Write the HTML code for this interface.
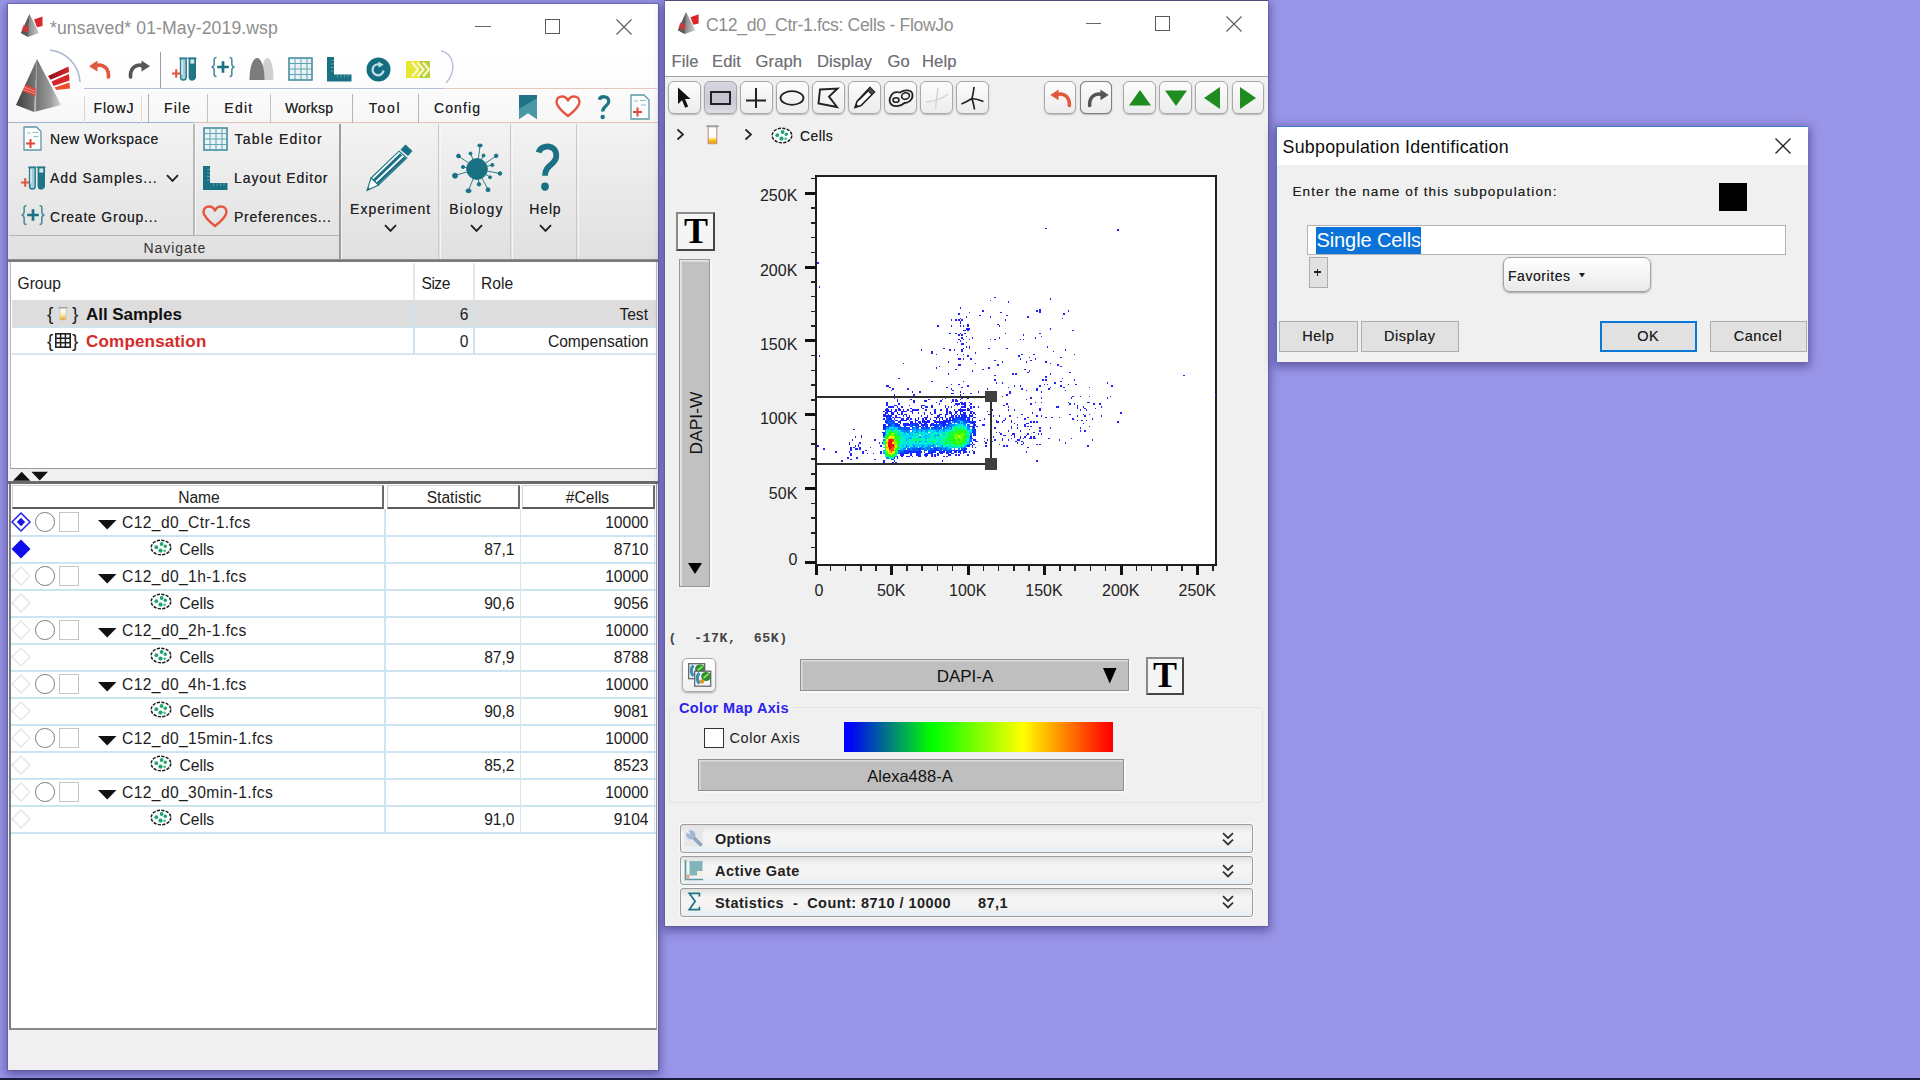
<!DOCTYPE html>
<html>
<head>
<meta charset="utf-8">
<title>FlowJo</title>
<style>
*{box-sizing:border-box;margin:0;padding:0}
html,body{width:1920px;height:1080px;overflow:hidden}
body{background:#9995e8;font-family:"Liberation Sans",sans-serif;position:relative;color:#1a1a1a}
.abs{position:absolute}
.win{position:absolute;background:#f0f0f0}
.t{position:absolute;white-space:nowrap;line-height:1}
svg{position:absolute;overflow:visible}
/* ---------- window 1 ---------- */
#w1{left:8px;top:4px;width:650px;height:1066px;box-shadow:0 0 0 1px rgba(90,85,150,.55),0 3px 9px 2px rgba(50,40,110,.55)}
#w2{left:665px;top:1px;width:603px;height:925px;box-shadow:0 0 0 1px rgba(90,85,150,.5),0 3px 9px 2px rgba(50,40,110,.55)}
#w3{left:1276px;top:126px;width:532px;height:236px;box-shadow:0 3px 9px 2px rgba(50,40,110,.55)}
.tb{font-size:15.6px;color:#1c1c1c}
.mn{font-size:16.6px;color:#727278;letter-spacing:.1px;text-shadow:0 0 .5px rgba(90,90,100,.6)}
.ax{font-size:16px;color:#222}
.dbtn{background:#e1e1e1;border:1.5px solid #adadad}
.dbt{font-size:14.5px;color:#222;text-align:center;letter-spacing:.6px;text-shadow:0 0 .5px rgba(0,0,0,.5)}
.rtxt{font-size:14px;color:#222;letter-spacing:.55px;text-shadow:0 0 .6px rgba(0,0,0,.55)}
</style>
</head>
<body>
<!-- ================= WINDOW 1 : workspace ================= -->
<div id="w1" class="win"></div>
<!-- title bar -->
<div class="abs" style="left:8px;top:4px;width:650px;height:46px;background:#fff"></div>
<svg style="left:20px;top:13px" width="26" height="25" viewBox="0 0 26 25">
  <defs><linearGradient id="pg1" x1="0" x2="1"><stop offset="0" stop-color="#4a4a4a"/><stop offset=".45" stop-color="#8a8a8a"/><stop offset="1" stop-color="#cfcfcf"/></linearGradient></defs>
  <path d="M9.5 1 L1 20 L8 24 L19 20 Z" fill="url(#pg1)"/>
  <path d="M9.5 1 L8 24 L1 20Z" fill="#555" opacity=".75"/>
  <path d="M3.5 12 L8.6 14 L8.2 20 L1.6 17.5Z" fill="#d8343a" opacity=".85"/>
  <path d="M14 6.5 L22.5 3.5 L22.5 13 L17 14.2Z" fill="#d9262c"/>
</svg>
<div class="t" id="t1title" style="left:50px;top:19.7px;font-size:17.6px;color:#8e8e8e;letter-spacing:.12px">*unsaved* 01-May-2019.wsp</div>
<div class="abs" style="left:475px;top:26px;width:16px;height:1px;background:#666"></div>
<div class="abs" style="left:545px;top:19px;width:15px;height:15px;border:1px solid #5a5a5a"></div>
<svg style="left:616px;top:19px" width="16" height="16" viewBox="0 0 16 16"><path d="M.5 .5L15.5 15.5M15.5 .5L.5 15.5" stroke="#5a5a5a" stroke-width="1.1" fill="none"/></svg>

<!-- quick access bar + tab row backgrounds -->
<div class="abs" style="left:8px;top:50px;width:650px;height:73px;background:linear-gradient(#fff 0,#fdfdfd 40%,#f6f6f7 100%)"></div>
<div class="abs" style="left:84px;top:88px;width:360px;height:1.2px;background:#b3bed8"></div>
<div class="abs" style="left:444px;top:88px;width:213px;height:1.2px;background:#e9c7be"></div>
<div class="abs" style="left:8px;top:122px;width:186px;height:1.2px;background:#a3b5d6"></div>
<div class="abs" style="left:194px;top:122px;width:464px;height:1.2px;background:#e6c2b9"></div>
<!-- big logo -->
<svg style="left:10px;top:46px" width="80" height="74" viewBox="0 0 80 74">
  <defs>
   <linearGradient id="pgL" x1="0" x2="1"><stop offset="0" stop-color="#3e3e3e"/><stop offset="1" stop-color="#7a7a7a"/></linearGradient>
   <linearGradient id="pgR" x1="0" x2="1"><stop offset="0" stop-color="#6e6e6e"/><stop offset=".6" stop-color="#9a9a9a"/><stop offset="1" stop-color="#d5d5d5"/></linearGradient>
   <linearGradient id="rd" x1="0" x2="1"><stop offset="0" stop-color="#8c1014"/><stop offset="1" stop-color="#d8242b"/></linearGradient>
  </defs>
  <path d="M40 4 A34 34 0 0 1 70 36" stroke="#a9b7d3" stroke-width="1.6" fill="none"/>
  <path d="M27 13 L6 59 L24 66 Z" fill="url(#pgL)"/>
  <path d="M27 13 L24 66 L51 59 Z" fill="url(#pgR)"/>
  <path d="M27 13 L24 66 L26 66Z" fill="#c9c9c9" opacity=".8"/>
  <path d="M15.5 38.5 L25.8 42.5 L25.2 50 L12.5 45.2Z" fill="#e0443f"/>
  <path d="M14.2 41.2L25.6 45.4M13.3 43.5L25.4 47.8" stroke="#f6a39c" stroke-width=".8"/>
  <path d="M38 30 L58.5 20.5 L59 26 L40.5 33.8Z" fill="url(#rd)"/>
  <path d="M41.5 35.5 L59 28 L59.5 34.5 L43.5 40Z" fill="#d7252c"/>
  <path d="M44.5 41.5 L59.5 36.5 L60 42.5 L46.5 44Z" fill="#e8502e"/>
</svg>
<!-- undo / redo -->
<svg style="left:88px;top:59px" width="26" height="22" viewBox="0 0 26 22"><path d="M7 7 C16 4 21 10 20.5 18" stroke="#e2573d" stroke-width="3.6" fill="none" stroke-linecap="round"/><path d="M1 7.2 L9.5 1.5 L9.5 12.5Z" fill="#e2573d"/></svg>
<svg style="left:125px;top:59px" width="26" height="22" viewBox="0 0 26 22"><path d="M19 7 C10 4 5 10 5.5 18" stroke="#555" stroke-width="3.6" fill="none" stroke-linecap="round"/><path d="M25 7.2 L16.5 1.5 L16.5 12.5Z" fill="#555"/></svg>
<div class="abs" style="left:160px;top:52px;width:1.3px;height:36px;background:#9d9da5"></div>
<!-- QAT icons -->
<svg style="left:171px;top:57px" width="26" height="25" viewBox="0 0 26 25" id="tubesQ">
  <path d="M1 16.5h8.5M5.2 12.2v8.6" stroke="#e2573d" stroke-width="2.1"/>
  <path d="M8.3 1.3h8.2" stroke="#2b7d8f" stroke-width="1.5"/><path d="M9.6 1.5v18.7a2.8 2.8 0 0 0 5.6 0V1.5z" fill="#a9cdd6" stroke="#2b7d8f" stroke-width="1.5"/><path d="M11 3v14.5" stroke="#dff0f3" stroke-width="1.4"/>
  <path d="M17 1.3h8.4" stroke="#1f7485" stroke-width="1.5"/><path d="M18.3 1.5v18.5a3 3 0 0 0 6 0V1.5z" fill="#1f7485" stroke="#1f7485" stroke-width="1.4"/>
  <path d="M19.3 2.4h4v4.2h-4z" fill="#cfe8ee"/>
</svg>
<svg style="left:210px;top:56px" width="26" height="23" viewBox="0 0 26 23"><path d="M6.5 1.5C3.5 1.5 4.2 4 4.2 7C4.2 9.5 3.5 10.8 1.5 11C3.5 11.2 4.2 12.5 4.2 15C4.2 18 3.5 20.5 6.5 20.5M19.5 1.5C22.5 1.5 21.8 4 21.8 7C21.8 9.5 22.5 10.8 24.5 11C22.5 11.2 21.8 12.5 21.8 15C21.8 18 22.5 20.5 19.5 20.5" fill="none" stroke="#4a8d9b" stroke-width="1.6"/><path d="M7.2 11h11.6M13 5.2v11.6" stroke="#1a7183" stroke-width="2.7"/></svg>
<svg style="left:249px;top:57px" width="25" height="23" viewBox="0 0 25 23">
  <path d="M12 23 C12 8 15.5 1 18.5 1 C21.5 1 24.5 8 24.5 23Z" fill="#cfcfcf"/>
  <path d="M.5 23 C.5 8 4.5 1 8 1 C11.5 1 15.5 8 15.5 23Z" fill="#7c7c7c"/>
</svg>
<svg style="left:288px;top:57px" width="25" height="24" viewBox="0 0 25 24"><rect x="1" y="1" width="23" height="22" fill="#e9f3f5" stroke="#3a8797" stroke-width="1.5"/><path d="M1 6.5h23M1 12h23M1 17.5h23M7 1v22M13 1v22M19 1v22" stroke="#5d9fad" stroke-width=".95"/></svg>
<svg style="left:327px;top:57px" width="25" height="25" viewBox="0 0 25 25"><path d="M0 0h7v17.5h17.5v7H0z" fill="#1a7183"/><path d="M4 3.5h3M4 7h3M4 10.500h3M4 14h3M10.500 17.5v3M14 17.5v3M17.5 17.5v3M21 17.5v3" stroke="#5fa0ae" stroke-width=".9"/></svg>
<svg style="left:366px;top:57px" width="25" height="25" viewBox="0 0 25 25"><circle cx="12.5" cy="12.5" r="12" fill="#176d80"/><path d="M17.5 13.5a5.5 5.5 0 1 1-3.6-5.9" stroke="#bfe1e8" stroke-width="2.2" fill="none"/><path d="M12.5 4.5l5 3.2-5 3z" fill="#bfe1e8"/></svg>
<svg style="left:406px;top:61px" width="24" height="17" viewBox="0 0 24 17"><rect width="24" height="17" fill="#e9e632"/><rect x="14" width="10" height="17" fill="#b6cf3a"/><path d="M6 1.5l6 7-6 7M11.5 1.5l6 7-6 7M17 1.5l6 7-6 7" stroke="#f7f7c8" stroke-width="2.4" fill="none"/></svg>
<svg style="left:436px;top:50px" width="22" height="36" viewBox="0 0 22 36"><path d="M5 1 C17 3 22 20 10 33" stroke="#b4bfd9" stroke-width="1.4" fill="none"/></svg>
<!-- tabs -->
<div class="abs" style="left:84px;top:96px;width:1.2px;height:27px;background:#e2d3cc"></div>
<div class="abs" style="left:141px;top:96px;width:1.2px;height:27px;background:#efd6c2"></div>
<div class="abs" style="left:148px;top:94px;width:1.3px;height:29px;background:#b0b0b4"></div>
<div class="abs" style="left:207px;top:94px;width:1.3px;height:29px;background:#c2c2c5"></div>
<div class="abs" style="left:269.5px;top:94px;width:1.3px;height:29px;background:#c2c2c5"></div>
<div class="abs" style="left:352px;top:94px;width:1.3px;height:29px;background:#b4b4b8"></div>
<div class="abs" style="left:418px;top:94px;width:1.3px;height:29px;background:#b4b4b8"></div>
<div class="t rtxt" style="left:93.5px;top:100.5px;letter-spacing:.85px">FlowJ</div>
<div class="t rtxt" style="left:164px;top:100.5px;letter-spacing:1.2px">File</div>
<div class="t rtxt" style="left:224.3px;top:100.5px;letter-spacing:1.25px">Edit</div>
<div class="t rtxt" style="left:285px;top:100.5px;letter-spacing:.15px">Worksp</div>
<div class="t rtxt" style="left:368.7px;top:100.5px;letter-spacing:1.75px">Tool</div>
<div class="t rtxt" style="left:434px;top:100.5px;letter-spacing:1.1px">Config</div>
<svg style="left:519px;top:95px" width="18" height="24" viewBox="0 0 18 24"><path d="M0 0h18v24l-9-6-9 6z" fill="#1f7485"/><path d="M0 14L18 3v21l-9-6-9 6z" fill="#4a97a6"/></svg>
<svg style="left:555px;top:95px" width="26" height="23" viewBox="0 0 26 23"><path d="M13 21 C4 14 1.5 10.5 1.5 7 C1.5 3.5 4 1.5 7 1.5 C9.8 1.5 12 3.2 13 5.6 C14 3.2 16.2 1.5 19 1.5 C22 1.5 24.5 3.5 24.5 7 C24.5 10.5 22 14 13 21Z" fill="#fff" stroke="#e3573f" stroke-width="2.4" stroke-linejoin="round"/></svg>
<svg style="left:597px;top:95px" width="14" height="25" viewBox="0 0 27 50"><path d="M4 9.5 C6 1.5 23 0.5 23 13 C23 22.5 10.8 21.5 10.8 33" stroke="#1f7485" stroke-width="6.6" fill="none"/><circle cx="10.8" cy="44" r="4.4" fill="#1f7485"/></svg>
<svg style="left:630px;top:94px" width="20" height="26" viewBox="0 0 20 26"><path d="M1 1h13l5 5v19H1z" fill="#fbfdfd" stroke="#5b98a5" stroke-width="1.3"/><path d="M4 7h4M10 6.5h6M11 11h5" stroke="#8fbcc6" stroke-width="1.2"/><path d="M3 18h9M7.5 13.5v9" stroke="#e2453a" stroke-width="2"/></svg>

<!-- ribbon -->
<div class="abs" style="left:8px;top:123.5px;width:650px;height:136px;background:linear-gradient(#f3f3f3 0,#ececec 35%,#e0e0e0 100%)"></div>
<div class="abs" style="left:8px;top:258.5px;width:650px;height:3.5px;background:linear-gradient(#9a9a9a,#6e6e6e 60%,#8a8a8a)"></div>
<div class="abs" style="left:193px;top:124px;width:1.5px;height:111px;background:#b9b9b9"></div>
<div class="abs" style="left:194.5px;top:124px;width:1px;height:111px;background:#f8f8f8"></div>
<div class="abs" style="left:9px;top:234.5px;width:330px;height:1.5px;background:#b4b4b4"></div>
<div class="abs" style="left:339px;top:124px;width:1.5px;height:135px;background:#9c9c9c"></div>
<div class="abs" style="left:340.5px;top:124px;width:1px;height:135px;background:#f6f6f6"></div>
<div class="abs" style="left:438px;top:124px;width:1.2px;height:135px;background:#c9c9c9"></div>
<div class="abs" style="left:439.5px;top:124px;width:1px;height:135px;background:#f6f6f6"></div>
<div class="abs" style="left:510px;top:124px;width:1.2px;height:135px;background:#c9c9c9"></div>
<div class="abs" style="left:511.5px;top:124px;width:1px;height:135px;background:#f6f6f6"></div>
<div class="abs" style="left:576px;top:124px;width:1.2px;height:135px;background:#c9c9c9"></div>
<div class="abs" style="left:577.5px;top:124px;width:1px;height:135px;background:#f6f6f6"></div>
<!-- ribbon col 1 -->
<svg style="left:22.5px;top:126px" width="19" height="25" viewBox="0 0 19 25"><path d="M1 1h12.5l4.5 4.5V24H1z" fill="#fbfdfd" stroke="#5b98a5" stroke-width="1.3"/><path d="M4 7h3.5M9.5 6.5h6M10.5 10.5h5" stroke="#8fbcc6" stroke-width="1.2"/><path d="M3 17.5h9M7.5 13v9" stroke="#e2453a" stroke-width="2"/></svg>
<div class="t rtxt" style="left:50px;top:131.5px">New Workspace</div>
<svg style="left:19.5px;top:165.5px" width="26" height="25" viewBox="0 0 26 25">
  <path d="M1 16.5h8.5M5.2 12.2v8.6" stroke="#e2573d" stroke-width="2.1"/>
  <path d="M8.3 1.3h8.2" stroke="#2b7d8f" stroke-width="1.5"/><path d="M9.6 1.5v18.7a2.8 2.8 0 0 0 5.6 0V1.5z" fill="#a9cdd6" stroke="#2b7d8f" stroke-width="1.5"/><path d="M11 3v14.5" stroke="#dff0f3" stroke-width="1.4"/>
  <path d="M17 1.3h8.4" stroke="#1f7485" stroke-width="1.5"/><path d="M18.3 1.5v18.5a3 3 0 0 0 6 0V1.5z" fill="#1f7485" stroke="#1f7485" stroke-width="1.4"/>
  <path d="M19.3 2.4h4v4.2h-4z" fill="#cfe8ee"/>
</svg>
<div class="t rtxt" style="left:50px;top:171px;letter-spacing:.9px">Add Samples...</div>
<svg style="left:166px;top:173.5px" width="13" height="9" viewBox="0 0 13 9"><path d="M1 1.2l5.5 5.6L12 1.2" stroke="#222" stroke-width="1.9" fill="none"/></svg>
<svg style="left:19.5px;top:203.5px" width="26" height="23" viewBox="0 0 26 23"><path d="M6.5 1.5C3.5 1.5 4.2 4 4.2 7C4.2 9.5 3.5 10.8 1.5 11C3.5 11.2 4.2 12.5 4.2 15C4.2 18 3.5 20.5 6.5 20.5M19.5 1.5C22.5 1.5 21.8 4 21.8 7C21.8 9.5 22.5 10.8 24.5 11C22.5 11.2 21.8 12.5 21.8 15C21.8 18 22.5 20.5 19.5 20.5" fill="none" stroke="#4a8d9b" stroke-width="1.6"/><path d="M7.2 11h11.6M13 5.2v11.6" stroke="#1a7183" stroke-width="2.7"/></svg>
<div class="t rtxt" style="left:50px;top:210px;letter-spacing:.77px">Create Group...</div>
<!-- ribbon col 2 -->
<svg style="left:202.5px;top:126.5px" width="25" height="24" viewBox="0 0 25 24"><rect x="1" y="1" width="23" height="22" fill="#e9f3f5" stroke="#3a8797" stroke-width="1.5"/><path d="M1 6.5h23M1 12h23M1 17.5h23M7 1v22M13 1v22M19 1v22" stroke="#5d9fad" stroke-width=".95"/></svg>
<div class="t rtxt" style="left:234.5px;top:131.5px;letter-spacing:1.2px">Table Editor</div>
<svg style="left:202.5px;top:165.5px" width="25" height="24" viewBox="0 0 25 24"><path d="M0 0h7v17h17.5v7H0z" fill="#1a7183"/><path d="M4 3.5h3M4 7h3M4 10.500h3M4 14h3M10.500 17v3M14 17v3M17.5 17v3M21 17v3" stroke="#5fa0ae" stroke-width=".9"/></svg>
<div class="t rtxt" style="left:234px;top:171px;letter-spacing:.92px">Layout Editor</div>
<svg style="left:202px;top:204.5px" width="26" height="23" viewBox="0 0 26 23"><path d="M13 21 C4 14 1.5 10.5 1.5 7 C1.5 3.5 4 1.5 7 1.5 C9.8 1.5 12 3.2 13 5.6 C14 3.2 16.2 1.5 19 1.5 C22 1.5 24.5 3.5 24.5 7 C24.5 10.5 22 14 13 21Z" fill="none" stroke="#e3573f" stroke-width="2.4" stroke-linejoin="round"/></svg>
<div class="t rtxt" style="left:234px;top:210px;letter-spacing:.75px">Preferences...</div>
<div class="t" style="left:143.5px;top:240.5px;font-size:14px;color:#333;letter-spacing:.95px">Navigate</div>
<!-- ribbon big buttons -->
<svg style="left:366.300px;top:142px" width="49" height="50" viewBox="0 0 49 50" id="pencil">
  <path d="M39.5 2.5 L46.5 9 L42 14 L34.5 7.800Z" fill="#1a7183"/>
  <path d="M33 9.200 L40.800 16 L12.500 43 L5 36Z" fill="#fff" stroke="#1a7183" stroke-width="1.1"/>
  <path d="M34 11.200 L36.300 13.200 L9 39.500 L7 37.500Z M37.800 14.500 L39.800 16.300 L12.300 42.300 L10.500 40.600Z" fill="#1a7183"/>
  <path d="M5 36 L12.500 43 L1 48.500Z" fill="#fff" stroke="#1a7183" stroke-width="1.1"/>
  <path d="M1 48.500l3.300-1.300-2-2z" fill="#1a7183"/>
</svg>
<div class="t rtxt" style="left:350px;top:201.5px;letter-spacing:1.05px">Experiment</div>
<svg style="left:384px;top:223.5px" width="13" height="9" viewBox="0 0 13 9"><path d="M1 1.2l5.5 5.6L12 1.2" stroke="#222" stroke-width="1.9" fill="none"/></svg>
<svg style="left:451px;top:141.500px" width="52" height="51" viewBox="0 0 52 51" id="virus">
  <g stroke="#1a7183" stroke-width=".9" fill="#1a7183">
   <circle cx="26" cy="27" r="10.400"/>
   <path d="M26 27L29 4M26 27L45 14M26 27L49 31.500M26 27L37 47.500M26 27L17.500 48.500M26 27L4 33.500M26 27L7.500 14M26 27L19.500 11.500M26 27L32.500 13.500M26 27L41 23M26 27L39 35M26 27L28 42M26 27L12 25"/>
   <ellipse cx="29" cy="3.500" rx="2.300" ry="1.500"/><circle cx="45.200" cy="13.800" r="1.800"/><circle cx="49" cy="31.500" r="1.800"/><circle cx="37" cy="47.800" r="2"/><ellipse cx="17.500" cy="48.800" rx="2.600" ry="1.900"/><circle cx="4" cy="33.700" r="2.500"/><circle cx="7.500" cy="14" r="1.900"/><circle cx="19.500" cy="11.500" r="1.500"/><circle cx="32.500" cy="13.500" r="1.500"/><circle cx="41.300" cy="23" r="1.600"/><circle cx="39" cy="35.300" r="1.500"/><circle cx="28" cy="42.300" r="1.800"/><circle cx="12" cy="25" r="1.600"/>
  </g>
</svg>
<div class="t rtxt" style="left:449.3px;top:201.5px;letter-spacing:1.2px">Biology</div>
<svg style="left:469.5px;top:223.5px" width="13" height="9" viewBox="0 0 13 9"><path d="M1 1.2l5.5 5.6L12 1.2" stroke="#222" stroke-width="1.9" fill="none"/></svg>
<svg style="left:535px;top:142.500px" width="25" height="49.500" viewBox="0 0 27 50" preserveAspectRatio="none"><path d="M4 9.5 C6 1.5 23 0.5 23 13 C23 22.5 10.8 21.5 10.8 33" stroke="#1a7183" stroke-width="6.200" fill="none"/><circle cx="10.8" cy="44" r="4.2" fill="#1a7183"/></svg>
<div class="t rtxt" style="left:529.3px;top:201.5px;letter-spacing:.85px">Help</div>
<svg style="left:538.5px;top:223.5px" width="13" height="9" viewBox="0 0 13 9"><path d="M1 1.2l5.5 5.6L12 1.2" stroke="#222" stroke-width="1.9" fill="none"/></svg>
<!-- group panel -->
<div class="abs" style="left:10px;top:262px;width:647px;height:207px;background:#fff;border-left:1.5px solid #b5b5b5;border-right:1.5px solid #c4c4c4;border-bottom:1.5px solid #9a9a9a"></div>
<div class="t tb" style="left:17.5px;top:275.5px">Group</div>
<div class="t tb" style="left:421.5px;top:275.5px;letter-spacing:-.5px">Size</div>
<div class="t tb" style="left:481px;top:275.5px">Role</div>
<div class="abs" style="left:413px;top:263px;width:1.5px;height:37px;background:#e6e6e6"></div>
<div class="abs" style="left:473px;top:263px;width:1.5px;height:37px;background:#e6e6e6"></div>
<div class="abs" style="left:11.5px;top:300px;width:644px;height:27px;background:#dddddd"></div>
<div class="abs" style="left:11.5px;top:326px;width:644px;height:2px;background:#cfe2e9"></div>
<div class="abs" style="left:11.5px;top:353px;width:644px;height:2px;background:#d3e8f0"></div>
<div class="abs" style="left:413px;top:300px;width:1.5px;height:54px;background:#cfe4ee"></div>
<div class="abs" style="left:473px;top:300px;width:1.5px;height:54px;background:#cfe4ee"></div>
<div class="t" style="left:47px;top:304px;font-size:19px;color:#222;letter-spacing:0">{</div>
<div class="t" style="left:72px;top:304px;font-size:19px;color:#222">}</div>
<svg style="left:58px;top:307px" width="10" height="14" viewBox="0 0 10 14"><defs><linearGradient id="tg" x1="0" y1="0" x2="0" y2="1"><stop offset="0" stop-color="#fff"/><stop offset=".5" stop-color="#fff3c0"/><stop offset="1" stop-color="#f0a000"/></linearGradient></defs><path d="M.5 .8h9" stroke="#999" stroke-width="1.4"/><path d="M2 1.5h6v11.5h-6z" fill="url(#tg)" stroke="#c9c9c9" stroke-width=".8"/></svg>
<div class="t" style="left:47px;top:331px;font-size:19px;color:#222">{</div>
<div class="t" style="left:72px;top:331px;font-size:19px;color:#222">}</div>
<svg style="left:55px;top:333px" width="16" height="15" viewBox="0 0 16 15"><rect x=".8" y=".8" width="14.4" height="13.4" fill="#fff" stroke="#222" stroke-width="1.6"/><path d="M.8 5.2h14.4M.8 9.8h14.4M5.6 .8v13.4M10.4 .8v13.4" stroke="#222" stroke-width="1.5"/></svg>
<div class="t" style="left:86px;top:305.5px;font-size:17px;font-weight:700;color:#111;letter-spacing:-.05px">All Samples</div>
<div class="t" style="left:86px;top:332.5px;font-size:17px;font-weight:700;color:#d62a2a;letter-spacing:.2px">Compensation</div>
<div class="t tb" style="right:1451.5px;top:306.5px">6</div>
<div class="t tb" style="right:1451.5px;top:333.5px">0</div>
<div class="t tb" style="right:1272.0px;top:306.5px">Test</div>
<div class="t tb" style="right:1271.5px;top:333.5px">Compensation</div>
<div class="abs" style="left:8px;top:470px;width:650px;height:12px;background:#f0f0f0"></div>
<svg style="left:13px;top:471px" width="36" height="10" viewBox="0 0 36 10"><path d="M0 9.8L8.7 .8L17.4 9.8Z M18.4 .8L35 .8L26.7 9.4Z" fill="#111"/></svg>
<div class="abs" style="left:8px;top:481px;width:650px;height:2.5px;background:#6b6b6b"></div>
<div class="abs" style="left:9px;top:483.5px;width:648px;height:546px;background:#fff;border-left:2px solid #7b7b7b;border-right:1.5px solid #9e9e9e;border-bottom:2px solid #8a8a8a"></div>
<div class="abs" style="left:12.0px;top:485px;width:372.0px;height:23.5px;background:#fff;border:1.5px solid #d0d0d0;border-right:2px solid #6a6a6a;border-bottom:2.5px solid #5a5a5a"></div>
<div class="t tb" style="left:139.0px;top:490px;width:120px;text-align:center">Name</div>
<div class="abs" style="left:386.5px;top:485px;width:133.0px;height:23.5px;background:#fff;border:1.5px solid #d0d0d0;border-right:2px solid #6a6a6a;border-bottom:2.5px solid #5a5a5a"></div>
<div class="t tb" style="left:394.0px;top:490px;width:120px;text-align:center">Statistic</div>
<div class="abs" style="left:521.5px;top:485px;width:133.0px;height:23.5px;background:#fff;border:1.5px solid #d0d0d0;border-right:2px solid #6a6a6a;border-bottom:2.5px solid #5a5a5a"></div>
<div class="t tb" style="left:527.5px;top:490px;width:120px;text-align:center">#Cells</div>
<div class="abs" style="left:11px;top:534.8px;width:644.5px;height:1.8px;background:#cde5f0"></div>
<svg style="left:11px;top:512px" width="20" height="20" viewBox="0 0 20 20"><path d="M10 1L19 10L10 19L1 10Z" fill="#fff" stroke="#2222ee" stroke-width="1.5"/><path d="M10 5.8L14.2 10L10 14.2L5.8 10Z" fill="#1515e6"/></svg>
<div class="abs" style="left:35px;top:512px;width:19.5px;height:19.5px;border:1.5px solid #7d7d7d;border-radius:50%;background:#fff"></div>
<div class="abs" style="left:59px;top:512px;width:19.5px;height:19.5px;border:1.5px solid #c4c4c4;background:#fff"></div>
<svg style="left:98px;top:519.5px" width="19" height="10" viewBox="0 0 19 10"><path d="M0 0H18.5L9.2 9.4Z" fill="#111"/></svg>
<div class="t tb" style="left:122px;top:515.4px;letter-spacing:.4px">C12_d0_Ctr-1.fcs</div>
<div class="t tb" style="right:1271.5px;top:515.4px">10000</div>
<div class="abs" style="left:11px;top:561.8px;width:644.5px;height:1.8px;background:#cde5f0"></div>
<svg style="left:11px;top:539px" width="20" height="20" viewBox="0 0 20 20"><path d="M10 .5L19.5 10L10 19.5L.5 10Z" fill="#0d0dee"/></svg>
<svg style="left:150px;top:539.0px" width="22" height="17" viewBox="0 0 22 17"><g><ellipse cx="11" cy="8.5" rx="9.8" ry="7.3" fill="#fbfffd" stroke="#1d1d1d" stroke-width="1.5" stroke-dasharray="3.2 1.3"/><circle cx="6.3" cy="8.2" r="1.9" fill="#20a36b"/><circle cx="11.6" cy="5" r="1.9" fill="#20a36b"/><circle cx="15.3" cy="7.2" r="1.7" fill="#20a36b"/><circle cx="10.5" cy="11.6" r="2.1" fill="#20a36b"/><circle cx="14.6" cy="11.8" r="1.3" fill="#3fb887"/></g></svg>
<div class="t tb" style="left:179.5px;top:542.4px">Cells</div>
<div class="t tb" style="right:1405.5px;top:542.4px">87,1</div>
<div class="t tb" style="right:1271.5px;top:542.4px">8710</div>
<div class="abs" style="left:11px;top:588.8px;width:644.5px;height:1.8px;background:#cde5f0"></div>
<svg style="left:11px;top:566px" width="20" height="20" viewBox="0 0 20 20"><path d="M10 1L19 10L10 19L1 10Z" fill="#fff" stroke="#e4e4e4" stroke-width="1.3"/></svg>
<div class="abs" style="left:35px;top:566px;width:19.5px;height:19.5px;border:1.5px solid #7d7d7d;border-radius:50%;background:#fff"></div>
<div class="abs" style="left:59px;top:566px;width:19.5px;height:19.5px;border:1.5px solid #c4c4c4;background:#fff"></div>
<svg style="left:98px;top:573.5px" width="19" height="10" viewBox="0 0 19 10"><path d="M0 0H18.5L9.2 9.4Z" fill="#111"/></svg>
<div class="t tb" style="left:122px;top:569.4px;letter-spacing:.4px">C12_d0_1h-1.fcs</div>
<div class="t tb" style="right:1271.5px;top:569.4px">10000</div>
<div class="abs" style="left:11px;top:615.8px;width:644.5px;height:1.8px;background:#cde5f0"></div>
<svg style="left:11px;top:593px" width="20" height="20" viewBox="0 0 20 20"><path d="M10 1L19 10L10 19L1 10Z" fill="#fff" stroke="#e4e4e4" stroke-width="1.3"/></svg>
<svg style="left:150px;top:593.0px" width="22" height="17" viewBox="0 0 22 17"><g><ellipse cx="11" cy="8.5" rx="9.8" ry="7.3" fill="#fbfffd" stroke="#1d1d1d" stroke-width="1.5" stroke-dasharray="3.2 1.3"/><circle cx="6.3" cy="8.2" r="1.9" fill="#20a36b"/><circle cx="11.6" cy="5" r="1.9" fill="#20a36b"/><circle cx="15.3" cy="7.2" r="1.7" fill="#20a36b"/><circle cx="10.5" cy="11.6" r="2.1" fill="#20a36b"/><circle cx="14.6" cy="11.8" r="1.3" fill="#3fb887"/></g></svg>
<div class="t tb" style="left:179.5px;top:596.4px">Cells</div>
<div class="t tb" style="right:1405.5px;top:596.4px">90,6</div>
<div class="t tb" style="right:1271.5px;top:596.4px">9056</div>
<div class="abs" style="left:11px;top:642.8px;width:644.5px;height:1.8px;background:#cde5f0"></div>
<svg style="left:11px;top:620px" width="20" height="20" viewBox="0 0 20 20"><path d="M10 1L19 10L10 19L1 10Z" fill="#fff" stroke="#e4e4e4" stroke-width="1.3"/></svg>
<div class="abs" style="left:35px;top:620px;width:19.5px;height:19.5px;border:1.5px solid #7d7d7d;border-radius:50%;background:#fff"></div>
<div class="abs" style="left:59px;top:620px;width:19.5px;height:19.5px;border:1.5px solid #c4c4c4;background:#fff"></div>
<svg style="left:98px;top:627.5px" width="19" height="10" viewBox="0 0 19 10"><path d="M0 0H18.5L9.2 9.4Z" fill="#111"/></svg>
<div class="t tb" style="left:122px;top:623.4px;letter-spacing:.4px">C12_d0_2h-1.fcs</div>
<div class="t tb" style="right:1271.5px;top:623.4px">10000</div>
<div class="abs" style="left:11px;top:669.8px;width:644.5px;height:1.8px;background:#cde5f0"></div>
<svg style="left:11px;top:647px" width="20" height="20" viewBox="0 0 20 20"><path d="M10 1L19 10L10 19L1 10Z" fill="#fff" stroke="#e4e4e4" stroke-width="1.3"/></svg>
<svg style="left:150px;top:647.0px" width="22" height="17" viewBox="0 0 22 17"><g><ellipse cx="11" cy="8.5" rx="9.8" ry="7.3" fill="#fbfffd" stroke="#1d1d1d" stroke-width="1.5" stroke-dasharray="3.2 1.3"/><circle cx="6.3" cy="8.2" r="1.9" fill="#20a36b"/><circle cx="11.6" cy="5" r="1.9" fill="#20a36b"/><circle cx="15.3" cy="7.2" r="1.7" fill="#20a36b"/><circle cx="10.5" cy="11.6" r="2.1" fill="#20a36b"/><circle cx="14.6" cy="11.8" r="1.3" fill="#3fb887"/></g></svg>
<div class="t tb" style="left:179.5px;top:650.4px">Cells</div>
<div class="t tb" style="right:1405.5px;top:650.4px">87,9</div>
<div class="t tb" style="right:1271.5px;top:650.4px">8788</div>
<div class="abs" style="left:11px;top:696.8px;width:644.5px;height:1.8px;background:#cde5f0"></div>
<svg style="left:11px;top:674px" width="20" height="20" viewBox="0 0 20 20"><path d="M10 1L19 10L10 19L1 10Z" fill="#fff" stroke="#e4e4e4" stroke-width="1.3"/></svg>
<div class="abs" style="left:35px;top:674px;width:19.5px;height:19.5px;border:1.5px solid #7d7d7d;border-radius:50%;background:#fff"></div>
<div class="abs" style="left:59px;top:674px;width:19.5px;height:19.5px;border:1.5px solid #c4c4c4;background:#fff"></div>
<svg style="left:98px;top:681.5px" width="19" height="10" viewBox="0 0 19 10"><path d="M0 0H18.5L9.2 9.4Z" fill="#111"/></svg>
<div class="t tb" style="left:122px;top:677.4px;letter-spacing:.4px">C12_d0_4h-1.fcs</div>
<div class="t tb" style="right:1271.5px;top:677.4px">10000</div>
<div class="abs" style="left:11px;top:723.8px;width:644.5px;height:1.8px;background:#cde5f0"></div>
<svg style="left:11px;top:701px" width="20" height="20" viewBox="0 0 20 20"><path d="M10 1L19 10L10 19L1 10Z" fill="#fff" stroke="#e4e4e4" stroke-width="1.3"/></svg>
<svg style="left:150px;top:701.0px" width="22" height="17" viewBox="0 0 22 17"><g><ellipse cx="11" cy="8.5" rx="9.8" ry="7.3" fill="#fbfffd" stroke="#1d1d1d" stroke-width="1.5" stroke-dasharray="3.2 1.3"/><circle cx="6.3" cy="8.2" r="1.9" fill="#20a36b"/><circle cx="11.6" cy="5" r="1.9" fill="#20a36b"/><circle cx="15.3" cy="7.2" r="1.7" fill="#20a36b"/><circle cx="10.5" cy="11.6" r="2.1" fill="#20a36b"/><circle cx="14.6" cy="11.8" r="1.3" fill="#3fb887"/></g></svg>
<div class="t tb" style="left:179.5px;top:704.4px">Cells</div>
<div class="t tb" style="right:1405.5px;top:704.4px">90,8</div>
<div class="t tb" style="right:1271.5px;top:704.4px">9081</div>
<div class="abs" style="left:11px;top:750.8px;width:644.5px;height:1.8px;background:#cde5f0"></div>
<svg style="left:11px;top:728px" width="20" height="20" viewBox="0 0 20 20"><path d="M10 1L19 10L10 19L1 10Z" fill="#fff" stroke="#e4e4e4" stroke-width="1.3"/></svg>
<div class="abs" style="left:35px;top:728px;width:19.5px;height:19.5px;border:1.5px solid #7d7d7d;border-radius:50%;background:#fff"></div>
<div class="abs" style="left:59px;top:728px;width:19.5px;height:19.5px;border:1.5px solid #c4c4c4;background:#fff"></div>
<svg style="left:98px;top:735.5px" width="19" height="10" viewBox="0 0 19 10"><path d="M0 0H18.5L9.2 9.4Z" fill="#111"/></svg>
<div class="t tb" style="left:122px;top:731.4px;letter-spacing:.4px">C12_d0_15min-1.fcs</div>
<div class="t tb" style="right:1271.5px;top:731.4px">10000</div>
<div class="abs" style="left:11px;top:777.8px;width:644.5px;height:1.8px;background:#cde5f0"></div>
<svg style="left:11px;top:755px" width="20" height="20" viewBox="0 0 20 20"><path d="M10 1L19 10L10 19L1 10Z" fill="#fff" stroke="#e4e4e4" stroke-width="1.3"/></svg>
<svg style="left:150px;top:755.0px" width="22" height="17" viewBox="0 0 22 17"><g><ellipse cx="11" cy="8.5" rx="9.8" ry="7.3" fill="#fbfffd" stroke="#1d1d1d" stroke-width="1.5" stroke-dasharray="3.2 1.3"/><circle cx="6.3" cy="8.2" r="1.9" fill="#20a36b"/><circle cx="11.6" cy="5" r="1.9" fill="#20a36b"/><circle cx="15.3" cy="7.2" r="1.7" fill="#20a36b"/><circle cx="10.5" cy="11.6" r="2.1" fill="#20a36b"/><circle cx="14.6" cy="11.8" r="1.3" fill="#3fb887"/></g></svg>
<div class="t tb" style="left:179.5px;top:758.4px">Cells</div>
<div class="t tb" style="right:1405.5px;top:758.4px">85,2</div>
<div class="t tb" style="right:1271.5px;top:758.4px">8523</div>
<div class="abs" style="left:11px;top:804.8px;width:644.5px;height:1.8px;background:#cde5f0"></div>
<svg style="left:11px;top:782px" width="20" height="20" viewBox="0 0 20 20"><path d="M10 1L19 10L10 19L1 10Z" fill="#fff" stroke="#e4e4e4" stroke-width="1.3"/></svg>
<div class="abs" style="left:35px;top:782px;width:19.5px;height:19.5px;border:1.5px solid #7d7d7d;border-radius:50%;background:#fff"></div>
<div class="abs" style="left:59px;top:782px;width:19.5px;height:19.5px;border:1.5px solid #c4c4c4;background:#fff"></div>
<svg style="left:98px;top:789.5px" width="19" height="10" viewBox="0 0 19 10"><path d="M0 0H18.5L9.2 9.4Z" fill="#111"/></svg>
<div class="t tb" style="left:122px;top:785.4px;letter-spacing:.4px">C12_d0_30min-1.fcs</div>
<div class="t tb" style="right:1271.5px;top:785.4px">10000</div>
<div class="abs" style="left:11px;top:831.8px;width:644.5px;height:1.8px;background:#cde5f0"></div>
<svg style="left:11px;top:809px" width="20" height="20" viewBox="0 0 20 20"><path d="M10 1L19 10L10 19L1 10Z" fill="#fff" stroke="#e4e4e4" stroke-width="1.3"/></svg>
<svg style="left:150px;top:809.0px" width="22" height="17" viewBox="0 0 22 17"><g><ellipse cx="11" cy="8.5" rx="9.8" ry="7.3" fill="#fbfffd" stroke="#1d1d1d" stroke-width="1.5" stroke-dasharray="3.2 1.3"/><circle cx="6.3" cy="8.2" r="1.9" fill="#20a36b"/><circle cx="11.6" cy="5" r="1.9" fill="#20a36b"/><circle cx="15.3" cy="7.2" r="1.7" fill="#20a36b"/><circle cx="10.5" cy="11.6" r="2.1" fill="#20a36b"/><circle cx="14.6" cy="11.8" r="1.3" fill="#3fb887"/></g></svg>
<div class="t tb" style="left:179.5px;top:812.4px">Cells</div>
<div class="t tb" style="right:1405.5px;top:812.4px">91,0</div>
<div class="t tb" style="right:1271.5px;top:812.4px">9104</div>
<div class="abs" style="left:384px;top:509px;width:1.5px;height:324px;background:#cfe6f1"></div>
<div class="abs" style="left:519.5px;top:509px;width:1.5px;height:324px;background:#cfe6f1"></div>
<div class="abs" style="left:653.5px;top:509px;width:1.5px;height:324px;background:#cfe6f1"></div>

<!-- ================= WINDOW 2 : graph ================= -->
<div class="abs" style="left:665px;top:0;width:603px;height:1.5px;background:#4b4a5c"></div>
<div id="w2" class="win"></div>
<div class="abs" style="left:665px;top:1px;width:603px;height:75px;background:#fff"></div>
<svg style="left:677px;top:11px" width="25" height="24" viewBox="0 0 26 25">
  <path d="M9.5 1 L1 20 L8 24 L19 20 Z" fill="url(#pg1)"/>
  <path d="M9.5 1 L8 24 L1 20Z" fill="#555" opacity=".75"/>
  <path d="M3.5 12 L8.6 14 L8.2 20 L1.6 17.5Z" fill="#d8343a" opacity=".85"/>
  <path d="M14 6.5 L22.5 3.5 L22.5 13 L17 14.2Z" fill="#d9262c"/>
</svg>
<div class="t" id="t2title" style="left:706px;top:17px;font-size:17.6px;color:#8e8e8e;letter-spacing:-.34px">C12_d0_Ctr-1.fcs: Cells - FlowJo</div>
<div class="abs" style="left:1086px;top:23px;width:15px;height:1px;background:#666"></div>
<div class="abs" style="left:1155px;top:16px;width:15px;height:15px;border:1px solid #5a5a5a"></div>
<svg style="left:1226px;top:16px" width="16" height="16" viewBox="0 0 16 16"><path d="M.5 .5L15.5 15.5M15.5 .5L.5 15.5" stroke="#5a5a5a" stroke-width="1.1" fill="none"/></svg>
<div class="t mn" style="left:671.5px;top:54px">File</div>
<div class="t mn" style="left:712.0px;top:54px">Edit</div>
<div class="t mn" style="left:755.5px;top:54px">Graph</div>
<div class="t mn" style="left:817.0px;top:54px">Display</div>
<div class="t mn" style="left:887.5px;top:54px">Go</div>
<div class="t mn" style="left:922.0px;top:54px">Help</div>
<div class="abs" style="left:665px;top:75.5px;width:603px;height:1.5px;background:#a2a2a2"></div>
<div class="abs" style="left:668.0px;top:81px;width:32.5px;height:32.5px;border-radius:6px;border:1.5px solid #a9a9a9;background:linear-gradient(#fdfdfd,#f3f3f3 55%,#ececec);box-shadow:0 1px 1.5px rgba(0,0,0,.25)"></div>
<div class="abs" style="left:704.0px;top:81px;width:32.5px;height:32.5px;border-radius:6px;border:1.5px solid #a9a9a9;background:linear-gradient(#d6d6e0,#c9c9d6 60%,#dcdce6);box-shadow:0 1px 1.5px rgba(0,0,0,.25)"></div>
<div class="abs" style="left:740.0px;top:81px;width:32.5px;height:32.5px;border-radius:6px;border:1.5px solid #a9a9a9;background:linear-gradient(#fdfdfd,#f3f3f3 55%,#ececec);box-shadow:0 1px 1.5px rgba(0,0,0,.25)"></div>
<div class="abs" style="left:776.0px;top:81px;width:32.5px;height:32.5px;border-radius:6px;border:1.5px solid #a9a9a9;background:linear-gradient(#fdfdfd,#f3f3f3 55%,#ececec);box-shadow:0 1px 1.5px rgba(0,0,0,.25)"></div>
<div class="abs" style="left:812.0px;top:81px;width:32.5px;height:32.5px;border-radius:6px;border:1.5px solid #a9a9a9;background:linear-gradient(#fdfdfd,#f3f3f3 55%,#ececec);box-shadow:0 1px 1.5px rgba(0,0,0,.25)"></div>
<div class="abs" style="left:848.0px;top:81px;width:32.5px;height:32.5px;border-radius:6px;border:1.5px solid #a9a9a9;background:linear-gradient(#fdfdfd,#f3f3f3 55%,#ececec);box-shadow:0 1px 1.5px rgba(0,0,0,.25)"></div>
<div class="abs" style="left:884.0px;top:81px;width:32.5px;height:32.5px;border-radius:6px;border:1.5px solid #a9a9a9;background:linear-gradient(#fdfdfd,#f3f3f3 55%,#ececec);box-shadow:0 1px 1.5px rgba(0,0,0,.25)"></div>
<div class="abs" style="left:920.0px;top:81px;width:32.5px;height:32.5px;border-radius:6px;border:1.5px solid #a9a9a9;background:linear-gradient(#fdfdfd,#f3f3f3 55%,#ececec);box-shadow:0 1px 1.5px rgba(0,0,0,.25)"></div>
<div class="abs" style="left:956.0px;top:81px;width:32.5px;height:32.5px;border-radius:6px;border:1.5px solid #a9a9a9;background:linear-gradient(#fdfdfd,#f3f3f3 55%,#ececec);box-shadow:0 1px 1.5px rgba(0,0,0,.25)"></div>
<div class="abs" style="left:1043.5px;top:81px;width:32.5px;height:32.5px;border-radius:6px;border:1.5px solid #a9a9a9;background:linear-gradient(#fdfdfd,#f3f3f3 55%,#ececec);box-shadow:0 1px 1.5px rgba(0,0,0,.25)"></div>
<div class="abs" style="left:1079.5px;top:81px;width:32.5px;height:32.5px;border-radius:6px;border:1.5px solid #a9a9a9;background:linear-gradient(#fdfdfd,#f3f3f3 55%,#ececec);box-shadow:0 1px 1.5px rgba(0,0,0,.25)"></div>
<div class="abs" style="left:1123.0px;top:81px;width:32.5px;height:32.5px;border-radius:6px;border:1.5px solid #a9a9a9;background:linear-gradient(#fdfdfd,#f3f3f3 55%,#ececec);box-shadow:0 1px 1.5px rgba(0,0,0,.25)"></div>
<div class="abs" style="left:1159.0px;top:81px;width:32.5px;height:32.5px;border-radius:6px;border:1.5px solid #a9a9a9;background:linear-gradient(#fdfdfd,#f3f3f3 55%,#ececec);box-shadow:0 1px 1.5px rgba(0,0,0,.25)"></div>
<div class="abs" style="left:1195.0px;top:81px;width:32.5px;height:32.5px;border-radius:6px;border:1.5px solid #a9a9a9;background:linear-gradient(#fdfdfd,#f3f3f3 55%,#ececec);box-shadow:0 1px 1.5px rgba(0,0,0,.25)"></div>
<div class="abs" style="left:1231.5px;top:81px;width:32.5px;height:32.5px;border-radius:6px;border:1.5px solid #a9a9a9;background:linear-gradient(#fdfdfd,#f3f3f3 55%,#ececec);box-shadow:0 1px 1.5px rgba(0,0,0,.25)"></div>
<div class="abs" style="left:1079.5px;top:81px;width:32.5px;height:32.5px;border-radius:6px;border:1.5px solid #7f7f7f"></div>
<svg style="left:676px;top:87px" width="18" height="22" viewBox="0 0 18 22"><path d="M2 .5L2 17L6 13.2L9.2 20.8L12.2 19.5L9 12L14.5 12Z" fill="#111"/></svg>
<div class="abs" style="left:710px;top:90.5px;width:21px;height:14px;border:2px solid #222;background:#c4c4d2"></div>
<svg style="left:745px;top:87px" width="22" height="22" viewBox="0 0 22 22"><path d="M1 13.5h20M11 1v20" stroke="#222" stroke-width="2" fill="none"/></svg>
<svg style="left:779px;top:89px" width="26" height="18" viewBox="0 0 26 18"><ellipse cx="13" cy="9" rx="11.5" ry="6.8" fill="none" stroke="#222" stroke-width="1.8"/></svg>
<svg style="left:817px;top:87px" width="23" height="22" viewBox="0 0 23 22"><path d="M3 2.5L20.5 1.5L12 9.5L20 20L1.5 16.5Z" fill="none" stroke="#222" stroke-width="1.9" stroke-linejoin="miter"/></svg>
<svg style="left:852px;top:85px" width="25" height="25" viewBox="0 0 25 25"><path d="M18 2.5L22.5 7L9 20.5L3 22.5L5 16.5Z" fill="#fff" stroke="#222" stroke-width="1.6"/><path d="M15.5 5L20 9.5" stroke="#222" stroke-width="1.6"/><path d="M18 2.5L22.5 7L20.5 9L16 4.5Z" fill="#444"/><path d="M3 22.5L4.2 18.8L6.8 21.3Z" fill="#222"/><path d="M7 15L16.5 5.5" stroke="#222" stroke-width="1.2"/></svg>
<svg style="left:888px;top:88px" width="26" height="20" viewBox="0 0 26 20"><path d="M3 8C5 3 10 4 12 4.5C16 1.5 24 1 24.5 6.5C25 12 20 15 16.5 15C13 18.5 5 19.5 2.5 15.5C1 13 1.5 10.5 3 8Z" fill="none" stroke="#222" stroke-width="1.8"/><ellipse cx="17.5" cy="8" rx="4" ry="3.2" fill="none" stroke="#222" stroke-width="1.6" transform="rotate(-20 17.5 8)"/><ellipse cx="8" cy="12" rx="3" ry="2.3" fill="none" stroke="#222" stroke-width="1.6"/></svg>
<svg style="left:925px;top:87px" width="24" height="23" viewBox="0 0 24 23"><path d="M13 1C12 8 11 15 10.5 22M1 15C8 14.5 17 12 23 7" stroke="#d4d4d4" stroke-width="1.5" fill="none"/></svg>
<svg style="left:960px;top:86px" width="25" height="25" viewBox="0 0 25 25"><path d="M14 1C13.5 6 13 9 12 12.5M12 12.5C8 15 5 16.5 1.5 18M12 12.5C13 16 14 19.5 14.5 23.5M12 12.5C16 13 19.5 14 23.5 15.5" stroke="#222" stroke-width="1.7" fill="none"/></svg>
<svg style="left:1049px;top:88px" width="26" height="21.500" viewBox="0 0 26 22"><path d="M7 7 C16 4 21 10 20.5 18" stroke="#e2573d" stroke-width="3.6" fill="none" stroke-linecap="round"/><path d="M1 7.2 L9.5 1.5 L9.5 12.5Z" fill="#e2573d"/></svg>
<svg style="left:1084px;top:88px" width="26" height="21.500" viewBox="0 0 26 22"><path d="M19 7 C10 4 5 10 5.5 18" stroke="#555" stroke-width="3.6" fill="none" stroke-linecap="round"/><path d="M25 7.2 L16.5 1.5 L16.5 12.5Z" fill="#555"/></svg>
<svg style="left:1129px;top:90px" width="22" height="16" viewBox="0 0 22 16"><path d="M11 0L22 15.5H0Z" fill="#1e8c1e"/></svg>
<svg style="left:1165px;top:90px" width="22" height="16" viewBox="0 0 22 16"><path d="M0 0.5H22L11 16Z" fill="#1e8c1e"/></svg>
<svg style="left:1204px;top:87px" width="16" height="22" viewBox="0 0 16 22"><path d="M16 0V22L0 11Z" fill="#1e8c1e"/></svg>
<svg style="left:1240px;top:87px" width="16" height="22" viewBox="0 0 16 22"><path d="M0 0V22L16 11Z" fill="#1e8c1e"/></svg>
<svg style="left:676px;top:128px" width="9" height="13" viewBox="0 0 9 13"><path d="M1.5 1.5L7 6.5L1.5 11.5" stroke="#222" stroke-width="1.7" fill="none"/></svg>
<svg style="left:706px;top:125px" width="13" height="20" viewBox="0 0 13 20"><defs><linearGradient id="tg2" x1="0" y1="0" x2="0" y2="1"><stop offset="0" stop-color="#fff"/><stop offset=".6" stop-color="#fff"/><stop offset=".66" stop-color="#ffe680"/><stop offset=".85" stop-color="#f4b400"/><stop offset="1" stop-color="#e87d1c"/></linearGradient></defs><path d="M.5 1.2h12" stroke="#888" stroke-width="1.6"/><path d="M2.2 2h8.6v17h-8.6z" fill="url(#tg2)" stroke="#c0c0c0" stroke-width=".9"/><path d="M2.2 2v17M10.8 2v17" stroke="#d64c3c" stroke-width=".8" opacity=".6"/></svg>
<svg style="left:744px;top:128px" width="9" height="13" viewBox="0 0 9 13"><path d="M1.5 1.5L7 6.5L1.5 11.5" stroke="#222" stroke-width="1.7" fill="none"/></svg>
<svg style="left:771px;top:126.5px" width="22" height="17" viewBox="0 0 22 17"><g><ellipse cx="11" cy="8.5" rx="9.8" ry="7.3" fill="#fbfffd" stroke="#1d1d1d" stroke-width="1.5" stroke-dasharray="3.2 1.3"/><circle cx="6.3" cy="8.2" r="1.9" fill="#20a36b"/><circle cx="11.6" cy="5" r="1.9" fill="#20a36b"/><circle cx="15.3" cy="7.2" r="1.7" fill="#20a36b"/><circle cx="10.5" cy="11.6" r="2.1" fill="#20a36b"/><circle cx="14.6" cy="11.8" r="1.3" fill="#3fb887"/></g></svg>
<div class="t rtxt" style="left:800px;top:128.5px;letter-spacing:.4px">Cells</div>
<div class="abs" style="left:676.0px;top:212.0px;width:38.5px;height:38.5px;background:#f5f5f5;border:2px solid #8a8a8a;border-right:2.5px solid #454545;border-bottom:2.5px solid #454545"></div>
<div class="t" style="left:684.0px;top:212.5px;font-family:'Liberation Serif',serif;font-weight:700;font-size:36.0px;color:#000">T</div>
<div class="abs" style="left:678.5px;top:258.5px;width:31.5px;height:328px;background:#c1c1c1;border:1.5px solid #969696;box-shadow:inset 1.8px 1.8px 0 #e4e4e4,1.5px 1.5px 0 #fafafa"></div>
<div class="t" style="left:696.7px;top:423.3px;font-size:17.4px;color:#111;transform:translate(-50%,-50%) rotate(-90deg);transform-origin:50% 50%">DAPI-W</div>
<svg style="left:688px;top:563px" width="14" height="11" viewBox="0 0 14 11"><path d="M0 0H14L7 11Z" fill="#000"/></svg>
<div class="abs" style="left:815px;top:174.5px;width:402px;height:391.5px;background:#fff;border:2px solid #1e1e1e"></div>
<div class="abs" style="left:829.5px;top:566px;width:1.6px;height:4.5px;background:#222"></div>
<div class="abs" style="left:844.8px;top:566px;width:1.6px;height:4.5px;background:#222"></div>
<div class="abs" style="left:860.1px;top:566px;width:1.6px;height:4.5px;background:#222"></div>
<div class="abs" style="left:875.4px;top:566px;width:1.6px;height:4.5px;background:#222"></div>
<div class="abs" style="left:906.0px;top:566px;width:1.6px;height:4.5px;background:#222"></div>
<div class="abs" style="left:921.3px;top:566px;width:1.6px;height:4.5px;background:#222"></div>
<div class="abs" style="left:936.6px;top:566px;width:1.6px;height:4.5px;background:#222"></div>
<div class="abs" style="left:951.9px;top:566px;width:1.6px;height:4.5px;background:#222"></div>
<div class="abs" style="left:982.5px;top:566px;width:1.6px;height:4.5px;background:#222"></div>
<div class="abs" style="left:997.8px;top:566px;width:1.6px;height:4.5px;background:#222"></div>
<div class="abs" style="left:1013.1px;top:566px;width:1.6px;height:4.5px;background:#222"></div>
<div class="abs" style="left:1028.4px;top:566px;width:1.6px;height:4.5px;background:#222"></div>
<div class="abs" style="left:1059.0px;top:566px;width:1.6px;height:4.5px;background:#222"></div>
<div class="abs" style="left:1074.3px;top:566px;width:1.6px;height:4.5px;background:#222"></div>
<div class="abs" style="left:1089.6px;top:566px;width:1.6px;height:4.5px;background:#222"></div>
<div class="abs" style="left:1104.9px;top:566px;width:1.6px;height:4.5px;background:#222"></div>
<div class="abs" style="left:1135.5px;top:566px;width:1.6px;height:4.5px;background:#222"></div>
<div class="abs" style="left:1150.8px;top:566px;width:1.6px;height:4.5px;background:#222"></div>
<div class="abs" style="left:1166.1px;top:566px;width:1.6px;height:4.5px;background:#222"></div>
<div class="abs" style="left:1181.4px;top:566px;width:1.6px;height:4.5px;background:#222"></div>
<div class="abs" style="left:1212.0px;top:566px;width:1.6px;height:4.5px;background:#222"></div>
<div class="abs" style="left:815.0px;top:566px;width:3px;height:9px;background:#111"></div>
<div class="abs" style="left:890.0px;top:566px;width:3px;height:9px;background:#111"></div>
<div class="abs" style="left:966.5px;top:566px;width:3px;height:9px;background:#111"></div>
<div class="abs" style="left:1042.8px;top:566px;width:3px;height:9px;background:#111"></div>
<div class="abs" style="left:1119.5px;top:566px;width:3px;height:9px;background:#111"></div>
<div class="abs" style="left:1196.0px;top:566px;width:3px;height:9px;background:#111"></div>
<div class="abs" style="left:805px;top:560.8px;width:10.5px;height:3px;background:#111"></div>
<div class="abs" style="left:810.5px;top:546.7px;width:5px;height:1.6px;background:#222"></div>
<div class="abs" style="left:810.5px;top:532.0px;width:5px;height:1.6px;background:#222"></div>
<div class="abs" style="left:810.5px;top:517.2px;width:5px;height:1.6px;background:#222"></div>
<div class="abs" style="left:810.5px;top:502.5px;width:5px;height:1.6px;background:#222"></div>
<div class="abs" style="left:805px;top:487.0px;width:10.5px;height:3px;background:#111"></div>
<div class="abs" style="left:810.5px;top:473.0px;width:5px;height:1.6px;background:#222"></div>
<div class="abs" style="left:810.5px;top:458.2px;width:5px;height:1.6px;background:#222"></div>
<div class="abs" style="left:810.5px;top:443.4px;width:5px;height:1.6px;background:#222"></div>
<div class="abs" style="left:810.5px;top:428.7px;width:5px;height:1.6px;background:#222"></div>
<div class="abs" style="left:805px;top:413.2px;width:10.5px;height:3px;background:#111"></div>
<div class="abs" style="left:810.5px;top:399.2px;width:5px;height:1.6px;background:#222"></div>
<div class="abs" style="left:810.5px;top:384.4px;width:5px;height:1.6px;background:#222"></div>
<div class="abs" style="left:810.5px;top:369.6px;width:5px;height:1.6px;background:#222"></div>
<div class="abs" style="left:810.5px;top:354.9px;width:5px;height:1.6px;background:#222"></div>
<div class="abs" style="left:805px;top:339.4px;width:10.5px;height:3px;background:#111"></div>
<div class="abs" style="left:810.5px;top:325.4px;width:5px;height:1.6px;background:#222"></div>
<div class="abs" style="left:810.5px;top:310.6px;width:5px;height:1.6px;background:#222"></div>
<div class="abs" style="left:810.5px;top:295.9px;width:5px;height:1.6px;background:#222"></div>
<div class="abs" style="left:810.5px;top:281.1px;width:5px;height:1.6px;background:#222"></div>
<div class="abs" style="left:805px;top:265.6px;width:10.5px;height:3px;background:#111"></div>
<div class="abs" style="left:810.5px;top:251.6px;width:5px;height:1.6px;background:#222"></div>
<div class="abs" style="left:810.5px;top:236.8px;width:5px;height:1.6px;background:#222"></div>
<div class="abs" style="left:810.5px;top:222.1px;width:5px;height:1.6px;background:#222"></div>
<div class="abs" style="left:810.5px;top:207.3px;width:5px;height:1.6px;background:#222"></div>
<div class="abs" style="left:805px;top:191.8px;width:10.5px;height:3px;background:#111"></div>
<div class="abs" style="left:810.5px;top:177.8px;width:5px;height:1.6px;background:#222"></div>
<div class="t ax" style="left:779.0px;top:583.2px;width:80px;text-align:center">0</div>
<div class="t ax" style="right:1122.7px;top:552.0px">0</div>
<div class="t ax" style="left:851.2px;top:583.2px;width:80px;text-align:center">50K</div>
<div class="t ax" style="right:1122.7px;top:486.0px">50K</div>
<div class="t ax" style="left:927.7px;top:583.2px;width:80px;text-align:center">100K</div>
<div class="t ax" style="right:1122.7px;top:411.0px">100K</div>
<div class="t ax" style="left:1004.0px;top:583.2px;width:80px;text-align:center">150K</div>
<div class="t ax" style="right:1122.7px;top:337.0px">150K</div>
<div class="t ax" style="left:1080.7px;top:583.2px;width:80px;text-align:center">200K</div>
<div class="t ax" style="right:1122.7px;top:263.0px">200K</div>
<div class="t ax" style="left:1157.2px;top:583.2px;width:80px;text-align:center">250K</div>
<div class="t ax" style="right:1122.7px;top:188.0px">250K</div>
<svg style="left:0;top:0" width="1920" height="1080" viewBox="0 0 1920 1080" shape-rendering="crispEdges">
<path fill="#2424f0" d="M1060 380.5h1.75v1.75h-1.75zM1033 431.5h1.75v1.75h-1.75zM854.5 436h1.75v1.75h-1.75zM1036 443.5h1.75v1.75h-1.75z"/>
<path fill="#2223f2" d="M1045 227.5h1.75v1.75h-1.75zM1117 229h1.75v1.75h-1.75zM817 262h1.75v1.75h-1.75zM818.5 286h1.75v1.75h-1.75zM994 296.5h1.75v1.75h-1.75zM1049.5 298h1.75v1.75h-1.75zM989.5 299.5h1.75v1.75h-1.75zM1007.5 301h1.75v1.75h-1.75zM959.5 307h1.75v1.75h-1.75zM1039 308.5h1.75v1.75h-1.75zM982 310h1.75v1.75h-1.75zM1036 310h1.75v1.75h-1.75zM1039 310h1.75v1.75h-1.75zM1067.5 310h1.75v1.75h-1.75zM968.5 311.5h1.75v1.75h-1.75zM1000 311.5h1.75v1.75h-1.75zM958 313h1.75v1.75h-1.75zM1063 313h1.75v1.75h-1.75zM979 314.5h1.75v1.75h-1.75zM1006 314.5h1.75v1.75h-1.75zM965.5 316h1.75v1.75h-1.75zM989.5 316h1.75v1.75h-1.75zM1027 316h1.75v1.75h-1.75zM959.5 317.5h1.75v1.75h-1.75zM1061.5 317.5h1.75v1.75h-1.75zM950.5 319h1.75v1.75h-1.75zM955 319h1.75v1.75h-1.75zM1004.5 319h1.75v1.75h-1.75zM967 323.5h1.75v1.75h-1.75zM997 323.5h1.75v1.75h-1.75zM937 325h1.75v1.75h-1.75zM950.5 325h1.75v1.75h-1.75zM959.5 325h1.75v1.75h-1.75zM962.5 325h1.75v1.75h-1.75zM967 325h1.75v1.75h-1.75zM998.5 325h1.75v1.75h-1.75zM968.5 328h1.75v1.75h-1.75zM1049.5 328h1.75v1.75h-1.75zM962.5 329.5h3.25v1.75h-3.25zM1072 329.5h1.75v1.75h-1.75zM949 332.5h1.75v1.75h-1.75zM955 332.5h1.75v1.75h-1.75zM959.5 332.5h1.75v1.75h-1.75zM964 332.5h1.75v1.75h-1.75zM1004.5 332.5h1.75v1.75h-1.75zM1039 332.5h1.75v1.75h-1.75zM958 334h1.75v1.75h-1.75zM961 334h1.75v1.75h-1.75zM1022.5 334h1.75v1.75h-1.75zM965.5 335.5h1.75v1.75h-1.75zM1040.5 335.5h1.75v1.75h-1.75zM971.5 337h1.75v1.75h-1.75zM998.5 337h1.75v1.75h-1.75zM1034.5 337h1.75v1.75h-1.75zM958 338.5h1.75v1.75h-1.75zM962.5 338.5h1.75v1.75h-1.75zM968.5 338.5h1.75v1.75h-1.75zM989.5 338.5h1.75v1.75h-1.75zM994 338.5h1.75v1.75h-1.75zM1019.5 338.5h1.75v1.75h-1.75zM1022.5 338.5h1.75v1.75h-1.75zM959.5 340h1.75v1.75h-1.75zM956.5 341.5h1.75v1.75h-1.75zM965.5 341.5h1.75v1.75h-1.75zM962.5 343h1.75v1.75h-1.75zM965.5 346h1.75v1.75h-1.75zM968.5 346h1.75v1.75h-1.75zM1046.5 346h1.75v1.75h-1.75zM943 347.5h1.75v1.75h-1.75zM962.5 347.5h1.75v1.75h-1.75zM968.5 347.5h1.75v1.75h-1.75zM988 347.5h1.75v1.75h-1.75zM1006 347.5h1.75v1.75h-1.75zM920.5 349h1.75v1.75h-1.75zM949 349h1.75v1.75h-1.75zM953.5 349h1.75v1.75h-1.75zM961 349h1.75v1.75h-1.75zM1064.5 349h1.75v1.75h-1.75zM931 350.5h1.75v1.75h-1.75zM961 350.5h1.75v1.75h-1.75zM1052.5 350.5h1.75v1.75h-1.75zM931 352h1.75v1.75h-1.75zM974.5 352h1.75v1.75h-1.75zM935.5 353.5h1.75v1.75h-1.75zM956.5 353.5h1.75v1.75h-1.75zM962.5 353.5h1.75v1.75h-1.75zM1021 353.5h1.75v1.75h-1.75zM1033 353.5h1.75v1.75h-1.75zM1073.5 353.5h1.75v1.75h-1.75zM818.5 355h1.75v1.75h-1.75zM967 355h1.75v1.75h-1.75zM1018 355h1.75v1.75h-1.75zM1028.5 356.5h1.75v1.75h-1.75zM1060 356.5h1.75v1.75h-1.75zM958 358h3.25v1.75h-3.25zM962.5 358h1.75v1.75h-1.75zM970 358h1.75v1.75h-1.75zM1019.5 358h1.75v1.75h-1.75zM1034.5 358h1.75v1.75h-1.75zM994 359.5h1.75v1.75h-1.75zM1030 359.5h1.75v1.75h-1.75zM947.5 361h1.75v1.75h-1.75zM1001.5 361h1.75v1.75h-1.75zM1025.5 361h1.75v1.75h-1.75zM1045 361h1.75v1.75h-1.75zM902.5 362.5h1.75v1.75h-1.75zM974.5 362.5h1.75v1.75h-1.75zM1049.5 362.5h1.75v1.75h-1.75zM958 364h3.25v1.75h-3.25zM997 364h1.75v1.75h-1.75zM1057 364h1.75v1.75h-1.75zM938.5 365.5h1.75v1.75h-1.75zM1060 365.5h1.75v1.75h-1.75zM935.5 367h1.75v1.75h-1.75zM988 367h1.75v1.75h-1.75zM955 368.5h1.75v1.75h-1.75zM982 368.5h1.75v1.75h-1.75zM1024 368.5h1.75v1.75h-1.75zM971.5 370h1.75v1.75h-1.75zM1028.5 370h1.75v1.75h-1.75zM1027 371.5h1.75v1.75h-1.75zM1069 371.5h1.75v1.75h-1.75zM947.5 373h1.75v1.75h-1.75zM1012 373h1.75v1.75h-1.75zM1015 373h1.75v1.75h-1.75zM1049.5 373h1.75v1.75h-1.75zM994 374.5h1.75v1.75h-1.75zM1183 374.5h1.75v1.75h-1.75zM1045 376h1.75v1.75h-1.75zM898 377.5h1.75v1.75h-1.75zM1061.5 377.5h1.75v1.75h-1.75zM994 379h1.75v1.75h-1.75zM1042 379h1.75v1.75h-1.75zM1045 379h1.75v1.75h-1.75zM1073.5 379h1.75v1.75h-1.75zM931 380.5h1.75v1.75h-1.75zM962.5 380.5h1.75v1.75h-1.75zM995.5 382h1.75v1.75h-1.75zM1001.5 382h1.75v1.75h-1.75zM1054 382h1.75v1.75h-1.75zM1106.5 382h1.75v1.75h-1.75zM950.5 383.5h1.75v1.75h-1.75zM958 383.5h1.75v1.75h-1.75zM1043.5 383.5h1.75v1.75h-1.75zM1046.5 383.5h1.75v1.75h-1.75zM1067.5 383.5h1.75v1.75h-1.75zM1075 383.5h1.75v1.75h-1.75zM886 385h3.25v1.75h-3.25zM967 385h1.75v1.75h-1.75zM1013.5 385h1.75v1.75h-1.75zM1019.5 385h1.75v1.75h-1.75zM1039 385h1.75v1.75h-1.75zM1060 385h1.75v1.75h-1.75zM1111 385h1.75v1.75h-1.75zM889 386.5h1.75v1.75h-1.75zM946 386.5h1.75v1.75h-1.75zM961 386.5h1.75v1.75h-1.75zM1007.5 386.5h1.75v1.75h-1.75zM1049.5 386.5h1.75v1.75h-1.75zM1063 386.5h1.75v1.75h-1.75zM1088.5 386.5h1.75v1.75h-1.75zM892 388h1.75v1.75h-1.75zM907 388h1.75v1.75h-1.75zM950.5 388h1.75v1.75h-1.75zM986.5 388h1.75v1.75h-1.75zM1021 388h1.75v1.75h-1.75zM1036 388h1.75v1.75h-1.75zM1048 388h1.75v1.75h-1.75zM890.5 389.5h1.75v1.75h-1.75zM952 389.5h1.75v1.75h-1.75zM1025.5 389.5h1.75v1.75h-1.75zM1036 389.5h1.75v1.75h-1.75zM1064.5 389.5h1.75v1.75h-1.75zM911.5 391h1.75v1.75h-1.75zM919 391h1.75v1.75h-1.75zM959.5 391h1.75v1.75h-1.75zM977.5 391h1.75v1.75h-1.75zM986.5 391h1.75v1.75h-1.75zM1009 391h1.75v1.75h-1.75zM1040.5 391h1.75v1.75h-1.75zM950.5 392.5h3.25v1.75h-3.25zM962.5 392.5h1.75v1.75h-1.75zM970 392.5h1.75v1.75h-1.75zM1009 392.5h1.75v1.75h-1.75zM893.5 394h1.75v1.75h-1.75zM913 394h1.75v1.75h-1.75zM959.5 394h1.75v1.75h-1.75zM1006 394h1.75v1.75h-1.75zM1214.5 394h1.75v1.75h-1.75zM892 395.5h1.75v1.75h-1.75zM941.5 395.5h1.75v1.75h-1.75zM965.5 395.5h1.75v1.75h-1.75zM1001.5 395.5h1.75v1.75h-1.75zM1072 395.5h1.75v1.75h-1.75zM1079.5 395.5h1.75v1.75h-1.75zM1088.5 395.5h1.75v1.75h-1.75zM1109.5 395.5h1.75v1.75h-1.75zM893.5 397h1.75v1.75h-1.75zM944.5 397h1.75v1.75h-1.75zM961 397h1.75v1.75h-1.75zM967 397h1.75v1.75h-1.75zM1030 397h1.75v1.75h-1.75zM1040.5 397h1.75v1.75h-1.75zM1070.5 397h1.75v1.75h-1.75zM1106.5 397h1.75v1.75h-1.75zM896.5 398.5h1.75v1.75h-1.75zM910 398.5h1.75v1.75h-1.75zM928 398.5h1.75v1.75h-1.75zM941.5 398.5h1.75v1.75h-1.75zM952 398.5h1.75v1.75h-1.75zM959.5 398.5h1.75v1.75h-1.75zM1025.5 398.5h1.75v1.75h-1.75zM896.5 400h1.75v1.75h-1.75zM913 400h1.75v1.75h-1.75zM923.5 400h3.25v1.75h-3.25zM940 400h1.75v1.75h-1.75zM952 400h1.75v1.75h-1.75zM955 400h1.75v1.75h-1.75zM886 401.5h1.75v1.75h-1.75zM913 401.5h1.75v1.75h-1.75zM935.5 401.5h1.75v1.75h-1.75zM950.5 401.5h1.75v1.75h-1.75zM968.5 401.5h1.75v1.75h-1.75zM1034.5 401.5h1.75v1.75h-1.75zM1040.5 401.5h1.75v1.75h-1.75zM1067.5 401.5h1.75v1.75h-1.75zM1087 401.5h3.25v1.75h-3.25zM886 403h1.75v1.75h-1.75zM898 403h1.75v1.75h-1.75zM938.5 403h1.75v1.75h-1.75zM1006 403h1.75v1.75h-1.75zM1030 403h1.75v1.75h-1.75zM1069 403h1.75v1.75h-1.75zM1073.5 403h1.75v1.75h-1.75zM1093 403h1.75v1.75h-1.75zM1099 403h1.75v1.75h-1.75zM893.5 404.5h1.75v1.75h-1.75zM908.5 404.5h1.75v1.75h-1.75zM931 404.5h1.75v1.75h-1.75zM968.5 404.5h1.75v1.75h-1.75zM1003 404.5h1.75v1.75h-1.75zM1076.5 404.5h1.75v1.75h-1.75zM901 406h1.75v1.75h-1.75zM920.5 406h1.75v1.75h-1.75zM926.5 406h1.75v1.75h-1.75zM944.5 406h1.75v1.75h-1.75zM950.5 406h1.75v1.75h-1.75zM973 406h1.75v1.75h-1.75zM977.5 406h1.75v1.75h-1.75zM1007.5 406h1.75v1.75h-1.75zM1055.5 406h3.25v1.75h-3.25zM1076.5 406h1.75v1.75h-1.75zM1082.5 406h1.75v1.75h-1.75zM1100.5 406h1.75v1.75h-1.75zM922 407.5h1.75v1.75h-1.75zM1039 407.5h1.75v1.75h-1.75zM1076.5 407.5h1.75v1.75h-1.75zM1084 407.5h1.75v1.75h-1.75zM1094.5 407.5h1.75v1.75h-1.75zM917.5 409h1.75v1.75h-1.75zM934 409h1.75v1.75h-1.75zM940 409h1.75v1.75h-1.75zM946 409h1.75v1.75h-1.75zM991 409h1.75v1.75h-1.75zM1007.5 409h1.75v1.75h-1.75zM1013.5 409h1.75v1.75h-1.75zM1039 409h1.75v1.75h-1.75zM1079.5 409h1.75v1.75h-1.75zM1085.5 409h1.75v1.75h-1.75zM883 410.5h1.75v1.75h-1.75zM986.5 410.5h1.75v1.75h-1.75zM917.5 412h1.75v1.75h-1.75zM923.5 412h1.75v1.75h-1.75zM929.5 412h1.75v1.75h-1.75zM1031.5 412h1.75v1.75h-1.75zM1120 412h1.75v1.75h-1.75zM931 413.5h1.75v1.75h-1.75zM974.5 413.5h1.75v1.75h-1.75zM988 413.5h1.75v1.75h-1.75zM1021 413.5h1.75v1.75h-1.75zM1069 413.5h1.75v1.75h-1.75zM1082.5 413.5h1.75v1.75h-1.75zM1088.5 413.5h1.75v1.75h-1.75zM905.5 415h1.75v1.75h-1.75zM992.5 415h1.75v1.75h-1.75zM998.5 415h1.75v1.75h-1.75zM1009 415h1.75v1.75h-1.75zM1036 415h1.75v1.75h-1.75zM1040.5 415h1.75v1.75h-1.75zM1076.5 415h1.75v1.75h-1.75zM1084 415h1.75v1.75h-1.75zM1100.5 415h1.75v1.75h-1.75zM1016.5 416.5h1.75v1.75h-1.75zM1027 416.5h1.75v1.75h-1.75zM1045 416.5h1.75v1.75h-1.75zM1051 416.5h1.75v1.75h-1.75zM1058.5 416.5h1.75v1.75h-1.75zM929.5 418h1.75v1.75h-1.75zM983.5 418h1.75v1.75h-1.75zM1004.5 418h1.75v1.75h-1.75zM1024 418h1.75v1.75h-1.75zM1072 418h1.75v1.75h-1.75zM1091.5 418h1.75v1.75h-1.75zM979 419.5h1.75v1.75h-1.75zM995.5 419.5h1.75v1.75h-1.75zM1010.5 419.5h1.75v1.75h-1.75zM1076.5 419.5h1.75v1.75h-1.75zM1081 419.5h1.75v1.75h-1.75zM1085.5 419.5h1.75v1.75h-1.75zM997 421h1.75v1.75h-1.75zM1001.5 421h1.75v1.75h-1.75zM1010.5 421h1.75v1.75h-1.75zM1030 421h1.75v1.75h-1.75zM1033 421h1.75v1.75h-1.75zM1036 421h1.75v1.75h-1.75zM1117 421h1.75v1.75h-1.75zM1013.5 422.5h1.75v1.75h-1.75zM1025.5 422.5h3.25v1.75h-3.25zM1082.5 422.5h1.75v1.75h-1.75zM982 424h3.25v1.75h-3.25zM1016.5 424h1.75v1.75h-1.75zM1010.5 425.5h1.75v1.75h-1.75zM1024 425.5h1.75v1.75h-1.75zM1027 425.5h1.75v1.75h-1.75zM1030 425.5h1.75v1.75h-1.75zM1088.5 425.5h1.75v1.75h-1.75zM994 427h1.75v1.75h-1.75zM1010.5 427h1.75v1.75h-1.75zM1016.5 427h1.75v1.75h-1.75zM1039 427h1.75v1.75h-1.75zM1049.5 427h1.75v1.75h-1.75zM1079.5 427h1.75v1.75h-1.75zM853 428.5h1.75v1.75h-1.75zM1028.5 428.5h1.75v1.75h-1.75zM1007.5 430h1.75v1.75h-1.75zM1019.5 430h1.75v1.75h-1.75zM1039 430h1.75v1.75h-1.75zM1079.5 430h1.75v1.75h-1.75zM1084 430h1.75v1.75h-1.75zM995.5 431.5h1.75v1.75h-1.75zM998.5 431.5h1.75v1.75h-1.75zM1000 433h1.75v1.75h-1.75zM1012 433h3.25v1.75h-3.25zM1027 433h1.75v1.75h-1.75zM1037.5 433h1.75v1.75h-1.75zM1040.5 433h1.75v1.75h-1.75zM860.5 434.5h1.75v1.75h-1.75zM1025.5 434.5h1.75v1.75h-1.75zM860.5 436h1.75v1.75h-1.75zM992.5 436h1.75v1.75h-1.75zM1024 436h1.75v1.75h-1.75zM983.5 437.5h1.75v1.75h-1.75zM1001.5 437.5h1.75v1.75h-1.75zM1010.5 437.5h1.75v1.75h-1.75zM1019.5 437.5h1.75v1.75h-1.75zM1022.5 437.5h1.75v1.75h-1.75zM1028.5 437.5h1.75v1.75h-1.75zM1048 437.5h1.75v1.75h-1.75zM1070.5 437.5h1.75v1.75h-1.75zM851.5 439h1.75v1.75h-1.75zM874 439h1.75v1.75h-1.75zM986.5 439h1.75v1.75h-1.75zM989.5 439h1.75v1.75h-1.75zM994 439h1.75v1.75h-1.75zM1001.5 439h1.75v1.75h-1.75zM1007.5 439h1.75v1.75h-1.75zM1018 439h1.75v1.75h-1.75zM1058.5 439h1.75v1.75h-1.75zM1091.5 439h1.75v1.75h-1.75zM983.5 440.5h1.75v1.75h-1.75zM991 440.5h1.75v1.75h-1.75zM1015 440.5h1.75v1.75h-1.75zM1021 440.5h1.75v1.75h-1.75zM848.5 442h1.75v1.75h-1.75zM859 442h1.75v1.75h-1.75zM878.5 442h1.75v1.75h-1.75zM985 442h1.75v1.75h-1.75zM1016.5 442h1.75v1.75h-1.75zM1022.5 442h1.75v1.75h-1.75zM1064.5 442h1.75v1.75h-1.75zM848.5 443.5h1.75v1.75h-1.75zM857.5 443.5h1.75v1.75h-1.75zM998.5 443.5h1.75v1.75h-1.75zM1021 443.5h1.75v1.75h-1.75zM1039 443.5h1.75v1.75h-1.75zM817 445h1.75v1.75h-1.75zM854.5 445h1.75v1.75h-1.75zM985 445h1.75v1.75h-1.75zM1003 445h1.75v1.75h-1.75zM1006 445h1.75v1.75h-1.75zM1087 445h1.75v1.75h-1.75zM850 446.5h1.75v1.75h-1.75zM869.5 446.5h1.75v1.75h-1.75zM974.5 446.5h1.75v1.75h-1.75zM1027 446.5h1.75v1.75h-1.75zM823 448h1.75v1.75h-1.75zM865 449.5h1.75v1.75h-1.75zM971.5 449.5h1.75v1.75h-1.75zM835 451h1.75v1.75h-1.75zM848.5 451h1.75v1.75h-1.75zM862 451h1.75v1.75h-1.75zM968.5 451h1.75v1.75h-1.75zM973 451h1.75v1.75h-1.75zM1025.5 451h1.75v1.75h-1.75zM862 452.5h1.75v1.75h-1.75zM866.5 452.5h1.75v1.75h-1.75zM872.5 452.5h1.75v1.75h-1.75zM973 452.5h1.75v1.75h-1.75zM850 454h1.75v1.75h-1.75zM955 454h1.75v1.75h-1.75zM967 454h1.75v1.75h-1.75zM931 455.5h1.75v1.75h-1.75zM847 457h1.75v1.75h-1.75zM856 457h1.75v1.75h-1.75zM850 458.5h1.75v1.75h-1.75zM874 458.5h1.75v1.75h-1.75zM841 460h1.75v1.75h-1.75zM883 460h1.75v1.75h-1.75zM941.5 460h1.75v1.75h-1.75zM1036 460h1.75v1.75h-1.75zM883 461.5h1.75v1.75h-1.75zM895 461.5h1.75v1.75h-1.75zM892 463h1.75v1.75h-1.75z"/>
<path fill="#1e22f6" d="M1039 311.5h1.75v1.75h-1.75zM958 319h1.75v1.75h-1.75zM961 319h1.75v1.75h-1.75zM959.5 320.5h1.75v1.75h-1.75zM959.5 322h1.75v1.75h-1.75zM965.5 328h3.25v1.75h-3.25zM967 329.5h1.75v1.75h-1.75zM961 337h1.75v1.75h-1.75zM961 343h1.75v1.75h-1.75zM955 398.5h1.75v1.75h-1.75zM956.5 400h1.75v1.75h-1.75zM959.5 401.5h3.25v1.75h-3.25zM964 401.5h1.75v1.75h-1.75zM955 403h4.75v1.75h-4.75zM961 403h1.75v1.75h-1.75zM964 403h1.75v1.75h-1.75zM970 403h1.75v1.75h-1.75zM886 404.5h1.75v1.75h-1.75zM895 404.5h1.75v1.75h-1.75zM920.5 404.5h4.75v1.75h-4.75zM944.5 404.5h1.75v1.75h-1.75zM953.5 404.5h1.75v1.75h-1.75zM956.5 404.5h1.75v1.75h-1.75zM964 404.5h1.75v1.75h-1.75zM887.5 406h6.25v1.75h-6.25zM896.5 406h1.75v1.75h-1.75zM925 406h1.75v1.75h-1.75zM931 406h1.75v1.75h-1.75zM947.5 406h1.75v1.75h-1.75zM961 406h4.75v1.75h-4.75zM970 406h1.75v1.75h-1.75zM886 407.5h1.75v1.75h-1.75zM898 407.5h1.75v1.75h-1.75zM910 407.5h1.75v1.75h-1.75zM946 407.5h1.75v1.75h-1.75zM959.5 407.5h1.75v1.75h-1.75zM967 407.5h1.75v1.75h-1.75zM970 407.5h1.75v1.75h-1.75zM884.5 409h3.25v1.75h-3.25zM895 409h1.75v1.75h-1.75zM898 409h3.25v1.75h-3.25zM902.5 409h1.75v1.75h-1.75zM907 409h1.75v1.75h-1.75zM911.5 409h6.25v1.75h-6.25zM925 409h1.75v1.75h-1.75zM953.5 409h1.75v1.75h-1.75zM958 409h1.75v1.75h-1.75zM964 409h1.75v1.75h-1.75zM967 409h1.75v1.75h-1.75zM893.5 410.5h3.25v1.75h-3.25zM901 410.5h6.25v1.75h-6.25zM911.5 410.5h1.75v1.75h-1.75zM934 410.5h1.75v1.75h-1.75zM946 410.5h1.75v1.75h-1.75zM949 410.5h1.75v1.75h-1.75zM955 410.5h3.25v1.75h-3.25zM970 410.5h3.25v1.75h-3.25zM890.5 412h1.75v1.75h-1.75zM896.5 412h1.75v1.75h-1.75zM901 412h1.75v1.75h-1.75zM911.5 412h1.75v1.75h-1.75zM934 412h1.75v1.75h-1.75zM946 412h1.75v1.75h-1.75zM949 412h3.25v1.75h-3.25zM964 412h1.75v1.75h-1.75zM973 412h1.75v1.75h-1.75zM883 413.5h1.75v1.75h-1.75zM898 413.5h1.75v1.75h-1.75zM901 413.5h1.75v1.75h-1.75zM904 413.5h3.25v1.75h-3.25zM923.5 413.5h1.75v1.75h-1.75zM938.5 413.5h3.25v1.75h-3.25zM944.5 413.5h3.25v1.75h-3.25zM950.5 413.5h1.75v1.75h-1.75zM956.5 413.5h1.75v1.75h-1.75zM883 415h1.75v1.75h-1.75zM895 415h1.75v1.75h-1.75zM902.5 415h1.75v1.75h-1.75zM908.5 415h1.75v1.75h-1.75zM920.5 415h1.75v1.75h-1.75zM926.5 415h1.75v1.75h-1.75zM937 415h3.25v1.75h-3.25zM944.5 415h1.75v1.75h-1.75zM968.5 415h1.75v1.75h-1.75zM895 416.5h6.25v1.75h-6.25zM908.5 416.5h1.75v1.75h-1.75zM917.5 416.5h1.75v1.75h-1.75zM925 416.5h3.25v1.75h-3.25zM934 416.5h4.75v1.75h-4.75zM940 416.5h3.25v1.75h-3.25zM944.5 416.5h1.75v1.75h-1.75zM973 416.5h3.25v1.75h-3.25zM883 418h1.75v1.75h-1.75zM902.5 418h1.75v1.75h-1.75zM907 418h1.75v1.75h-1.75zM910 418h1.75v1.75h-1.75zM914.5 418h1.75v1.75h-1.75zM917.5 418h1.75v1.75h-1.75zM922 418h1.75v1.75h-1.75zM938.5 418h1.75v1.75h-1.75zM941.5 418h1.75v1.75h-1.75zM899.5 419.5h1.75v1.75h-1.75zM902.5 419.5h1.75v1.75h-1.75zM905.5 419.5h1.75v1.75h-1.75zM926.5 419.5h3.25v1.75h-3.25zM938.5 419.5h1.75v1.75h-1.75zM1003 419.5h1.75v1.75h-1.75zM917.5 421h1.75v1.75h-1.75zM974.5 421h1.75v1.75h-1.75zM995.5 421h1.75v1.75h-1.75zM904 422.5h1.75v1.75h-1.75zM973 424h3.25v1.75h-3.25zM1024 424h1.75v1.75h-1.75zM976 425.5h1.75v1.75h-1.75zM881.5 431.5h1.75v1.75h-1.75zM1003 434.5h3.25v1.75h-3.25zM1010.5 434.5h1.75v1.75h-1.75zM1013.5 434.5h1.75v1.75h-1.75zM1013.5 436h1.75v1.75h-1.75zM1019.5 436h1.75v1.75h-1.75zM1030 436h1.75v1.75h-1.75zM1033 436h1.75v1.75h-1.75zM1030 437.5h1.75v1.75h-1.75zM1033 437.5h3.25v1.75h-3.25zM974.5 439h1.75v1.75h-1.75zM1016.5 439h1.75v1.75h-1.75zM974.5 440.5h3.25v1.75h-3.25zM973 443.5h1.75v1.75h-1.75zM857.5 445h1.75v1.75h-1.75zM880 445h1.75v1.75h-1.75zM971.5 445h1.75v1.75h-1.75zM853 446.5h1.75v1.75h-1.75zM859 446.5h1.75v1.75h-1.75zM971.5 446.5h1.75v1.75h-1.75zM850 448h1.75v1.75h-1.75zM854.5 448h3.25v1.75h-3.25zM859 448h1.75v1.75h-1.75zM850 449.5h1.75v1.75h-1.75zM880 451h1.75v1.75h-1.75zM965.5 451h1.75v1.75h-1.75zM850 452.5h1.75v1.75h-1.75zM880 452.5h1.75v1.75h-1.75zM952 452.5h1.75v1.75h-1.75zM962.5 452.5h1.75v1.75h-1.75zM931 454h1.75v1.75h-1.75zM934 454h1.75v1.75h-1.75zM937 454h1.75v1.75h-1.75zM958 454h1.75v1.75h-1.75zM905.5 455.5h4.75v1.75h-4.75zM911.5 455.5h1.75v1.75h-1.75zM925 455.5h1.75v1.75h-1.75zM934 455.5h1.75v1.75h-1.75zM943 455.5h1.75v1.75h-1.75zM946 455.5h1.75v1.75h-1.75zM892 461.5h1.75v1.75h-1.75z"/>
<path fill="#181ffc" d="M962.5 403h1.75v1.75h-1.75zM887.5 409h1.75v1.75h-1.75zM890.5 409h1.75v1.75h-1.75zM959.5 409h4.75v1.75h-4.75zM968.5 409h1.75v1.75h-1.75zM886 410.5h6.25v1.75h-6.25zM910 410.5h1.75v1.75h-1.75zM959.5 410.5h3.25v1.75h-3.25zM884.5 412h3.25v1.75h-3.25zM892 412h1.75v1.75h-1.75zM955 412h1.75v1.75h-1.75zM959.5 412h1.75v1.75h-1.75zM962.5 412h1.75v1.75h-1.75zM970 412h1.75v1.75h-1.75zM884.5 413.5h1.75v1.75h-1.75zM890.5 413.5h3.25v1.75h-3.25zM962.5 413.5h1.75v1.75h-1.75zM968.5 413.5h1.75v1.75h-1.75zM971.5 413.5h1.75v1.75h-1.75zM884.5 415h3.25v1.75h-3.25zM889 415h1.75v1.75h-1.75zM950.5 415h3.25v1.75h-3.25zM955 415h1.75v1.75h-1.75zM961 415h1.75v1.75h-1.75zM964 415h1.75v1.75h-1.75zM970 415h3.25v1.75h-3.25zM892 416.5h1.75v1.75h-1.75zM907 416.5h1.75v1.75h-1.75zM923.5 416.5h1.75v1.75h-1.75zM949 416.5h3.25v1.75h-3.25zM961 416.5h1.75v1.75h-1.75zM889 418h3.25v1.75h-3.25zM893.5 418h1.75v1.75h-1.75zM901 418h1.75v1.75h-1.75zM905.5 418h1.75v1.75h-1.75zM925 418h1.75v1.75h-1.75zM935.5 418h1.75v1.75h-1.75zM946 418h1.75v1.75h-1.75zM949 418h1.75v1.75h-1.75zM952 418h1.75v1.75h-1.75zM968.5 418h1.75v1.75h-1.75zM971.5 418h1.75v1.75h-1.75zM892 419.5h1.75v1.75h-1.75zM895 419.5h3.25v1.75h-3.25zM901 419.5h1.75v1.75h-1.75zM904 419.5h1.75v1.75h-1.75zM908.5 419.5h1.75v1.75h-1.75zM914.5 419.5h3.25v1.75h-3.25zM922 419.5h3.25v1.75h-3.25zM932.5 419.5h3.25v1.75h-3.25zM943 419.5h9.25v1.75h-9.25zM971.5 419.5h1.75v1.75h-1.75zM884.5 421h1.75v1.75h-1.75zM898 421h3.25v1.75h-3.25zM910 421h3.25v1.75h-3.25zM914.5 421h1.75v1.75h-1.75zM919 421h1.75v1.75h-1.75zM922 421h7.75v1.75h-7.75zM934 421h12.25v1.75h-12.25zM973 421h1.75v1.75h-1.75zM899.5 422.5h1.75v1.75h-1.75zM902.5 422.5h1.75v1.75h-1.75zM905.5 422.5h3.25v1.75h-3.25zM910 422.5h3.25v1.75h-3.25zM914.5 422.5h3.25v1.75h-3.25zM919 422.5h3.25v1.75h-3.25zM931 422.5h3.25v1.75h-3.25zM941.5 422.5h4.75v1.75h-4.75zM973 422.5h1.75v1.75h-1.75zM883 424h3.25v1.75h-3.25zM902.5 424h1.75v1.75h-1.75zM905.5 424h4.75v1.75h-4.75zM920.5 424h4.75v1.75h-4.75zM926.5 424h1.75v1.75h-1.75zM929.5 424h1.75v1.75h-1.75zM932.5 424h1.75v1.75h-1.75zM943 424h1.75v1.75h-1.75zM883 425.5h1.75v1.75h-1.75zM925 425.5h1.75v1.75h-1.75zM883 427h1.75v1.75h-1.75zM920.5 427h1.75v1.75h-1.75zM974.5 428.5h1.75v1.75h-1.75zM974.5 433h1.75v1.75h-1.75zM883 434.5h1.75v1.75h-1.75zM973 439h1.75v1.75h-1.75zM971.5 442h1.75v1.75h-1.75zM968.5 445h1.75v1.75h-1.75zM962.5 449.5h1.75v1.75h-1.75zM916 451h1.75v1.75h-1.75zM932.5 451h1.75v1.75h-1.75zM941.5 451h3.25v1.75h-3.25zM950.5 451h1.75v1.75h-1.75zM955 451h1.75v1.75h-1.75zM958 451h3.25v1.75h-3.25zM962.5 451h3.25v1.75h-3.25zM902.5 452.5h6.25v1.75h-6.25zM910 452.5h1.75v1.75h-1.75zM926.5 452.5h3.25v1.75h-3.25zM931 452.5h1.75v1.75h-1.75zM937 452.5h1.75v1.75h-1.75zM940 452.5h3.25v1.75h-3.25zM946 452.5h1.75v1.75h-1.75zM950.5 452.5h1.75v1.75h-1.75zM959.5 452.5h1.75v1.75h-1.75zM899.5 454h4.75v1.75h-4.75zM910 454h1.75v1.75h-1.75zM916 454h3.25v1.75h-3.25zM923.5 454h4.75v1.75h-4.75zM947.5 454h3.25v1.75h-3.25zM901 455.5h1.75v1.75h-1.75zM917.5 455.5h3.25v1.75h-3.25zM896.5 457h1.75v1.75h-1.75zM893.5 460h1.75v1.75h-1.75z"/>
<path fill="#0f31ff" d="M887.5 413.5h1.75v1.75h-1.75zM953.5 413.5h1.75v1.75h-1.75zM959.5 413.5h3.25v1.75h-3.25zM964 413.5h1.75v1.75h-1.75zM887.5 415h1.75v1.75h-1.75zM890.5 415h1.75v1.75h-1.75zM958 415h1.75v1.75h-1.75zM965.5 415h1.75v1.75h-1.75zM886 416.5h1.75v1.75h-1.75zM889 416.5h1.75v1.75h-1.75zM952 416.5h1.75v1.75h-1.75zM955 416.5h4.75v1.75h-4.75zM962.5 416.5h3.25v1.75h-3.25zM967 416.5h3.25v1.75h-3.25zM887.5 418h1.75v1.75h-1.75zM953.5 418h1.75v1.75h-1.75zM956.5 418h1.75v1.75h-1.75zM959.5 418h6.25v1.75h-6.25zM967 418h1.75v1.75h-1.75zM884.5 419.5h1.75v1.75h-1.75zM952 419.5h3.25v1.75h-3.25zM962.5 419.5h3.25v1.75h-3.25zM967 419.5h3.25v1.75h-3.25zM886 421h1.75v1.75h-1.75zM946 421h3.25v1.75h-3.25zM968.5 421h4.75v1.75h-4.75zM895 422.5h3.25v1.75h-3.25zM913 422.5h1.75v1.75h-1.75zM923.5 422.5h3.25v1.75h-3.25zM935.5 422.5h1.75v1.75h-1.75zM938.5 422.5h3.25v1.75h-3.25zM949 422.5h1.75v1.75h-1.75zM971.5 422.5h1.75v1.75h-1.75zM887.5 424h3.25v1.75h-3.25zM895 424h4.75v1.75h-4.75zM904 424h1.75v1.75h-1.75zM911.5 424h1.75v1.75h-1.75zM914.5 424h4.75v1.75h-4.75zM925 424h1.75v1.75h-1.75zM931 424h1.75v1.75h-1.75zM934 424h3.25v1.75h-3.25zM941.5 424h1.75v1.75h-1.75zM944.5 424h1.75v1.75h-1.75zM947.5 424h1.75v1.75h-1.75zM886 425.5h3.25v1.75h-3.25zM899.5 425.5h1.75v1.75h-1.75zM904 425.5h1.75v1.75h-1.75zM910 425.5h1.75v1.75h-1.75zM919 425.5h1.75v1.75h-1.75zM922 425.5h1.75v1.75h-1.75zM926.5 425.5h1.75v1.75h-1.75zM929.5 425.5h1.75v1.75h-1.75zM935.5 425.5h3.25v1.75h-3.25zM943 425.5h1.75v1.75h-1.75zM970 425.5h4.75v1.75h-4.75zM884.5 427h1.75v1.75h-1.75zM905.5 427h1.75v1.75h-1.75zM908.5 427h1.75v1.75h-1.75zM911.5 427h1.75v1.75h-1.75zM926.5 427h1.75v1.75h-1.75zM934 427h1.75v1.75h-1.75zM973 427h1.75v1.75h-1.75zM883 428.5h1.75v1.75h-1.75zM904 428.5h1.75v1.75h-1.75zM938.5 428.5h1.75v1.75h-1.75zM973 430h3.25v1.75h-3.25zM883 431.5h1.75v1.75h-1.75zM971.5 431.5h3.25v1.75h-3.25zM883 433h1.75v1.75h-1.75zM973 433h1.75v1.75h-1.75zM973 434.5h3.25v1.75h-3.25zM970 436h1.75v1.75h-1.75zM970 437.5h3.25v1.75h-3.25zM970 440.5h1.75v1.75h-1.75zM881.5 442h1.75v1.75h-1.75zM970 443.5h1.75v1.75h-1.75zM967 445h1.75v1.75h-1.75zM920.5 446.5h1.75v1.75h-1.75zM917.5 448h3.25v1.75h-3.25zM934 448h3.25v1.75h-3.25zM964 448h3.25v1.75h-3.25zM904 449.5h3.25v1.75h-3.25zM908.5 449.5h1.75v1.75h-1.75zM919 449.5h1.75v1.75h-1.75zM931 449.5h7.75v1.75h-7.75zM943 449.5h1.75v1.75h-1.75zM947.5 449.5h1.75v1.75h-1.75zM950.5 449.5h1.75v1.75h-1.75zM955 449.5h1.75v1.75h-1.75zM959.5 449.5h3.25v1.75h-3.25zM964 449.5h1.75v1.75h-1.75zM904 451h12.25v1.75h-12.25zM917.5 451h4.75v1.75h-4.75zM923.5 451h1.75v1.75h-1.75zM928 451h4.75v1.75h-4.75zM934 451h1.75v1.75h-1.75zM938.5 451h3.25v1.75h-3.25zM946 451h1.75v1.75h-1.75zM949 451h1.75v1.75h-1.75zM953.5 451h1.75v1.75h-1.75zM899.5 452.5h3.25v1.75h-3.25zM916 452.5h4.75v1.75h-4.75zM925 452.5h1.75v1.75h-1.75zM929.5 452.5h1.75v1.75h-1.75zM947.5 452.5h1.75v1.75h-1.75zM919 454h1.75v1.75h-1.75zM896.5 455.5h1.75v1.75h-1.75zM893.5 457h1.75v1.75h-1.75zM892 458.5h1.75v1.75h-1.75z"/>
<path fill="#0559ff" d="M962.5 415h1.75v1.75h-1.75zM887.5 416.5h1.75v1.75h-1.75zM959.5 416.5h1.75v1.75h-1.75zM965.5 416.5h1.75v1.75h-1.75zM886 418h1.75v1.75h-1.75zM955 418h1.75v1.75h-1.75zM958 418h1.75v1.75h-1.75zM886 419.5h6.25v1.75h-6.25zM955 419.5h3.25v1.75h-3.25zM961 419.5h1.75v1.75h-1.75zM965.5 419.5h1.75v1.75h-1.75zM887.5 421h7.75v1.75h-7.75zM949 421h1.75v1.75h-1.75zM953.5 421h3.25v1.75h-3.25zM958 421h1.75v1.75h-1.75zM962.5 421h6.25v1.75h-6.25zM886 422.5h9.25v1.75h-9.25zM947.5 422.5h1.75v1.75h-1.75zM950.5 422.5h1.75v1.75h-1.75zM970 422.5h1.75v1.75h-1.75zM890.5 424h1.75v1.75h-1.75zM893.5 424h1.75v1.75h-1.75zM910 424h1.75v1.75h-1.75zM913 424h1.75v1.75h-1.75zM937 424h4.75v1.75h-4.75zM946 424h1.75v1.75h-1.75zM967 424h1.75v1.75h-1.75zM884.5 425.5h1.75v1.75h-1.75zM895 425.5h4.75v1.75h-4.75zM911.5 425.5h1.75v1.75h-1.75zM916 425.5h3.25v1.75h-3.25zM934 425.5h1.75v1.75h-1.75zM940 425.5h3.25v1.75h-3.25zM946 425.5h1.75v1.75h-1.75zM949 425.5h3.25v1.75h-3.25zM968.5 425.5h1.75v1.75h-1.75zM898 427h7.75v1.75h-7.75zM907 427h1.75v1.75h-1.75zM916 427h3.25v1.75h-3.25zM922 427h4.75v1.75h-4.75zM928 427h1.75v1.75h-1.75zM931 427h3.25v1.75h-3.25zM935.5 427h6.25v1.75h-6.25zM943 427h1.75v1.75h-1.75zM950.5 427h1.75v1.75h-1.75zM971.5 427h1.75v1.75h-1.75zM884.5 428.5h1.75v1.75h-1.75zM899.5 428.5h3.25v1.75h-3.25zM905.5 428.5h6.25v1.75h-6.25zM917.5 428.5h1.75v1.75h-1.75zM923.5 428.5h1.75v1.75h-1.75zM935.5 428.5h1.75v1.75h-1.75zM971.5 428.5h3.25v1.75h-3.25zM905.5 430h1.75v1.75h-1.75zM920.5 430h1.75v1.75h-1.75zM971.5 430h1.75v1.75h-1.75zM907 431.5h1.75v1.75h-1.75zM974.5 431.5h1.75v1.75h-1.75zM970 434.5h1.75v1.75h-1.75zM932.5 443.5h1.75v1.75h-1.75zM968.5 443.5h1.75v1.75h-1.75zM905.5 445h1.75v1.75h-1.75zM965.5 445h1.75v1.75h-1.75zM905.5 446.5h1.75v1.75h-1.75zM926.5 446.5h1.75v1.75h-1.75zM929.5 446.5h1.75v1.75h-1.75zM934 446.5h1.75v1.75h-1.75zM937 446.5h1.75v1.75h-1.75zM964 446.5h1.75v1.75h-1.75zM907 448h3.25v1.75h-3.25zM911.5 448h6.25v1.75h-6.25zM922 448h1.75v1.75h-1.75zM926.5 448h1.75v1.75h-1.75zM929.5 448h3.25v1.75h-3.25zM937 448h1.75v1.75h-1.75zM940 448h1.75v1.75h-1.75zM944.5 448h1.75v1.75h-1.75zM961 448h3.25v1.75h-3.25zM898 449.5h3.25v1.75h-3.25zM902.5 449.5h1.75v1.75h-1.75zM907 449.5h1.75v1.75h-1.75zM910 449.5h9.25v1.75h-9.25zM923.5 449.5h3.25v1.75h-3.25zM928 449.5h3.25v1.75h-3.25zM938.5 449.5h3.25v1.75h-3.25zM944.5 449.5h3.25v1.75h-3.25zM949 449.5h1.75v1.75h-1.75zM952 449.5h3.25v1.75h-3.25zM956.5 449.5h3.25v1.75h-3.25zM899.5 451h4.75v1.75h-4.75zM947.5 451h1.75v1.75h-1.75zM898 452.5h1.75v1.75h-1.75zM890.5 458.5h1.75v1.75h-1.75z"/>
<path fill="#008dff" d="M958 419.5h3.25v1.75h-3.25zM952 421h1.75v1.75h-1.75zM956.5 421h1.75v1.75h-1.75zM953.5 422.5h1.75v1.75h-1.75zM958 422.5h1.75v1.75h-1.75zM961 422.5h6.25v1.75h-6.25zM892 424h1.75v1.75h-1.75zM949 424h6.25v1.75h-6.25zM964 424h1.75v1.75h-1.75zM968.5 424h1.75v1.75h-1.75zM889 425.5h6.25v1.75h-6.25zM914.5 425.5h1.75v1.75h-1.75zM947.5 425.5h1.75v1.75h-1.75zM967 425.5h1.75v1.75h-1.75zM886 427h3.25v1.75h-3.25zM893.5 427h1.75v1.75h-1.75zM913 427h3.25v1.75h-3.25zM944.5 427h4.75v1.75h-4.75zM967 427h3.25v1.75h-3.25zM887.5 428.5h1.75v1.75h-1.75zM890.5 428.5h3.25v1.75h-3.25zM896.5 428.5h3.25v1.75h-3.25zM902.5 428.5h1.75v1.75h-1.75zM913 428.5h1.75v1.75h-1.75zM916 428.5h1.75v1.75h-1.75zM919 428.5h4.75v1.75h-4.75zM925 428.5h4.75v1.75h-4.75zM931 428.5h4.75v1.75h-4.75zM937 428.5h1.75v1.75h-1.75zM941.5 428.5h3.25v1.75h-3.25zM949 428.5h1.75v1.75h-1.75zM967 428.5h1.75v1.75h-1.75zM884.5 430h1.75v1.75h-1.75zM901 430h4.75v1.75h-4.75zM907 430h3.25v1.75h-3.25zM911.5 430h1.75v1.75h-1.75zM916 430h1.75v1.75h-1.75zM925 430h3.25v1.75h-3.25zM935.5 430h3.25v1.75h-3.25zM943 430h1.75v1.75h-1.75zM884.5 431.5h1.75v1.75h-1.75zM904 431.5h1.75v1.75h-1.75zM914.5 431.5h3.25v1.75h-3.25zM926.5 431.5h1.75v1.75h-1.75zM884.5 433h1.75v1.75h-1.75zM908.5 433h1.75v1.75h-1.75zM970 433h1.75v1.75h-1.75zM911.5 434.5h1.75v1.75h-1.75zM925 434.5h1.75v1.75h-1.75zM934 434.5h1.75v1.75h-1.75zM937 434.5h1.75v1.75h-1.75zM883 436h1.75v1.75h-1.75zM919 436h1.75v1.75h-1.75zM908.5 437.5h3.25v1.75h-3.25zM925 437.5h1.75v1.75h-1.75zM883 439h1.75v1.75h-1.75zM905.5 439h1.75v1.75h-1.75zM968.5 439h3.25v1.75h-3.25zM914.5 440.5h1.75v1.75h-1.75zM919 440.5h1.75v1.75h-1.75zM925 440.5h1.75v1.75h-1.75zM968.5 440.5h1.75v1.75h-1.75zM968.5 442h1.75v1.75h-1.75zM911.5 443.5h1.75v1.75h-1.75zM935.5 443.5h1.75v1.75h-1.75zM967 443.5h1.75v1.75h-1.75zM913 445h1.75v1.75h-1.75zM922 445h1.75v1.75h-1.75zM928 445h1.75v1.75h-1.75zM931 445h3.25v1.75h-3.25zM941.5 445h1.75v1.75h-1.75zM910 446.5h7.75v1.75h-7.75zM919 446.5h1.75v1.75h-1.75zM925 446.5h1.75v1.75h-1.75zM928 446.5h1.75v1.75h-1.75zM932.5 446.5h1.75v1.75h-1.75zM935.5 446.5h1.75v1.75h-1.75zM938.5 446.5h4.75v1.75h-4.75zM944.5 446.5h3.25v1.75h-3.25zM961 446.5h1.75v1.75h-1.75zM902.5 448h3.25v1.75h-3.25zM910 448h1.75v1.75h-1.75zM920.5 448h1.75v1.75h-1.75zM923.5 448h3.25v1.75h-3.25zM928 448h1.75v1.75h-1.75zM932.5 448h1.75v1.75h-1.75zM938.5 448h1.75v1.75h-1.75zM941.5 448h3.25v1.75h-3.25zM946 448h1.75v1.75h-1.75zM949 448h1.75v1.75h-1.75zM953.5 448h1.75v1.75h-1.75zM958 448h1.75v1.75h-1.75zM901 449.5h1.75v1.75h-1.75zM898 451h1.75v1.75h-1.75zM883 452.5h1.75v1.75h-1.75zM895 455.5h1.75v1.75h-1.75zM886 457h3.25v1.75h-3.25z"/>
<path fill="#00ccff" d="M959.5 421h3.25v1.75h-3.25zM956.5 422.5h1.75v1.75h-1.75zM959.5 422.5h1.75v1.75h-1.75zM955 424h3.25v1.75h-3.25zM959.5 424h1.75v1.75h-1.75zM962.5 424h1.75v1.75h-1.75zM952 425.5h1.75v1.75h-1.75zM889 427h3.25v1.75h-3.25zM895 427h3.25v1.75h-3.25zM949 427h1.75v1.75h-1.75zM886 428.5h1.75v1.75h-1.75zM911.5 428.5h1.75v1.75h-1.75zM914.5 428.5h1.75v1.75h-1.75zM929.5 428.5h1.75v1.75h-1.75zM940 428.5h1.75v1.75h-1.75zM944.5 428.5h4.75v1.75h-4.75zM950.5 428.5h1.75v1.75h-1.75zM968.5 428.5h3.25v1.75h-3.25zM899.5 430h1.75v1.75h-1.75zM913 430h3.25v1.75h-3.25zM917.5 430h3.25v1.75h-3.25zM922 430h3.25v1.75h-3.25zM929.5 430h1.75v1.75h-1.75zM932.5 430h3.25v1.75h-3.25zM940 430h3.25v1.75h-3.25zM946 430h1.75v1.75h-1.75zM968.5 430h1.75v1.75h-1.75zM899.5 431.5h1.75v1.75h-1.75zM902.5 431.5h1.75v1.75h-1.75zM908.5 431.5h6.25v1.75h-6.25zM917.5 431.5h1.75v1.75h-1.75zM920.5 431.5h1.75v1.75h-1.75zM925 431.5h1.75v1.75h-1.75zM931 431.5h1.75v1.75h-1.75zM937 431.5h1.75v1.75h-1.75zM940 431.5h1.75v1.75h-1.75zM968.5 431.5h3.25v1.75h-3.25zM898 433h1.75v1.75h-1.75zM902.5 433h3.25v1.75h-3.25zM910 433h3.25v1.75h-3.25zM914.5 433h1.75v1.75h-1.75zM917.5 433h1.75v1.75h-1.75zM920.5 433h1.75v1.75h-1.75zM923.5 433h1.75v1.75h-1.75zM928 433h1.75v1.75h-1.75zM937 433h1.75v1.75h-1.75zM943 433h1.75v1.75h-1.75zM884.5 434.5h1.75v1.75h-1.75zM901 434.5h4.75v1.75h-4.75zM910 434.5h1.75v1.75h-1.75zM913 434.5h3.25v1.75h-3.25zM917.5 434.5h1.75v1.75h-1.75zM926.5 434.5h4.75v1.75h-4.75zM935.5 434.5h1.75v1.75h-1.75zM905.5 436h6.25v1.75h-6.25zM920.5 436h1.75v1.75h-1.75zM923.5 436h6.25v1.75h-6.25zM934 436h1.75v1.75h-1.75zM968.5 436h1.75v1.75h-1.75zM904 437.5h1.75v1.75h-1.75zM907 437.5h1.75v1.75h-1.75zM932.5 437.5h1.75v1.75h-1.75zM968.5 437.5h1.75v1.75h-1.75zM907 439h1.75v1.75h-1.75zM938.5 439h1.75v1.75h-1.75zM904 440.5h1.75v1.75h-1.75zM911.5 440.5h1.75v1.75h-1.75zM920.5 440.5h1.75v1.75h-1.75zM965.5 440.5h1.75v1.75h-1.75zM907 442h1.75v1.75h-1.75zM914.5 442h1.75v1.75h-1.75zM917.5 442h1.75v1.75h-1.75zM931 442h1.75v1.75h-1.75zM937 442h1.75v1.75h-1.75zM967 442h1.75v1.75h-1.75zM901 443.5h3.25v1.75h-3.25zM905.5 443.5h1.75v1.75h-1.75zM913 443.5h1.75v1.75h-1.75zM916 443.5h1.75v1.75h-1.75zM919 443.5h1.75v1.75h-1.75zM922 443.5h3.25v1.75h-3.25zM926.5 443.5h4.75v1.75h-4.75zM934 443.5h1.75v1.75h-1.75zM938.5 443.5h1.75v1.75h-1.75zM901 445h3.25v1.75h-3.25zM907 445h3.25v1.75h-3.25zM914.5 445h7.75v1.75h-7.75zM925 445h3.25v1.75h-3.25zM929.5 445h1.75v1.75h-1.75zM934 445h1.75v1.75h-1.75zM940 445h1.75v1.75h-1.75zM949 445h1.75v1.75h-1.75zM964 445h1.75v1.75h-1.75zM902.5 446.5h3.25v1.75h-3.25zM907 446.5h1.75v1.75h-1.75zM922 446.5h3.25v1.75h-3.25zM943 446.5h1.75v1.75h-1.75zM947.5 446.5h1.75v1.75h-1.75zM952 446.5h4.75v1.75h-4.75zM962.5 446.5h1.75v1.75h-1.75zM899.5 448h3.25v1.75h-3.25zM947.5 448h1.75v1.75h-1.75zM950.5 448h1.75v1.75h-1.75zM883 449.5h1.75v1.75h-1.75zM883 451h1.75v1.75h-1.75zM896.5 452.5h1.75v1.75h-1.75zM884.5 455.5h1.75v1.75h-1.75z"/>
<path fill="#00eeda" d="M958 424h1.75v1.75h-1.75zM961 424h1.75v1.75h-1.75zM953.5 425.5h1.75v1.75h-1.75zM961 425.5h6.25v1.75h-6.25zM892 427h1.75v1.75h-1.75zM952 427h1.75v1.75h-1.75zM958 427h1.75v1.75h-1.75zM964 427h3.25v1.75h-3.25zM889 428.5h1.75v1.75h-1.75zM965.5 428.5h1.75v1.75h-1.75zM886 430h1.75v1.75h-1.75zM892 430h1.75v1.75h-1.75zM896.5 430h3.25v1.75h-3.25zM928 430h1.75v1.75h-1.75zM931 430h1.75v1.75h-1.75zM938.5 430h1.75v1.75h-1.75zM944.5 430h1.75v1.75h-1.75zM947.5 430h3.25v1.75h-3.25zM967 430h1.75v1.75h-1.75zM970 430h1.75v1.75h-1.75zM887.5 431.5h1.75v1.75h-1.75zM905.5 431.5h1.75v1.75h-1.75zM919 431.5h1.75v1.75h-1.75zM922 431.5h3.25v1.75h-3.25zM929.5 431.5h1.75v1.75h-1.75zM932.5 431.5h1.75v1.75h-1.75zM935.5 431.5h1.75v1.75h-1.75zM941.5 431.5h1.75v1.75h-1.75zM901 433h1.75v1.75h-1.75zM905.5 433h3.25v1.75h-3.25zM922 433h1.75v1.75h-1.75zM925 433h3.25v1.75h-3.25zM931 433h6.25v1.75h-6.25zM938.5 433h1.75v1.75h-1.75zM941.5 433h1.75v1.75h-1.75zM946 433h1.75v1.75h-1.75zM968.5 433h1.75v1.75h-1.75zM899.5 434.5h1.75v1.75h-1.75zM905.5 434.5h4.75v1.75h-4.75zM916 434.5h1.75v1.75h-1.75zM920.5 434.5h4.75v1.75h-4.75zM967 434.5h3.25v1.75h-3.25zM901 436h4.75v1.75h-4.75zM913 436h6.25v1.75h-6.25zM922 436h1.75v1.75h-1.75zM929.5 436h3.25v1.75h-3.25zM937 436h1.75v1.75h-1.75zM940 436h3.25v1.75h-3.25zM944.5 436h1.75v1.75h-1.75zM901 437.5h3.25v1.75h-3.25zM905.5 437.5h1.75v1.75h-1.75zM913 437.5h1.75v1.75h-1.75zM916 437.5h1.75v1.75h-1.75zM919 437.5h1.75v1.75h-1.75zM923.5 437.5h1.75v1.75h-1.75zM929.5 437.5h3.25v1.75h-3.25zM934 437.5h7.75v1.75h-7.75zM967 437.5h1.75v1.75h-1.75zM899.5 439h1.75v1.75h-1.75zM902.5 439h1.75v1.75h-1.75zM922 439h4.75v1.75h-4.75zM928 439h3.25v1.75h-3.25zM932.5 439h1.75v1.75h-1.75zM940 439h1.75v1.75h-1.75zM967 439h1.75v1.75h-1.75zM902.5 440.5h1.75v1.75h-1.75zM905.5 440.5h1.75v1.75h-1.75zM908.5 440.5h3.25v1.75h-3.25zM916 440.5h3.25v1.75h-3.25zM922 440.5h3.25v1.75h-3.25zM937 440.5h3.25v1.75h-3.25zM943 440.5h1.75v1.75h-1.75zM967 440.5h1.75v1.75h-1.75zM883 442h1.75v1.75h-1.75zM901 442h6.25v1.75h-6.25zM910 442h4.75v1.75h-4.75zM919 442h4.75v1.75h-4.75zM925 442h6.25v1.75h-6.25zM932.5 442h1.75v1.75h-1.75zM935.5 442h1.75v1.75h-1.75zM938.5 442h1.75v1.75h-1.75zM904 443.5h1.75v1.75h-1.75zM907 443.5h4.75v1.75h-4.75zM914.5 443.5h1.75v1.75h-1.75zM917.5 443.5h1.75v1.75h-1.75zM920.5 443.5h1.75v1.75h-1.75zM925 443.5h1.75v1.75h-1.75zM931 443.5h1.75v1.75h-1.75zM940 443.5h3.25v1.75h-3.25zM962.5 443.5h4.75v1.75h-4.75zM898 445h1.75v1.75h-1.75zM904 445h1.75v1.75h-1.75zM910 445h3.25v1.75h-3.25zM923.5 445h1.75v1.75h-1.75zM937 445h3.25v1.75h-3.25zM943 445h4.75v1.75h-4.75zM950.5 445h1.75v1.75h-1.75zM962.5 445h1.75v1.75h-1.75zM883 446.5h1.75v1.75h-1.75zM901 446.5h1.75v1.75h-1.75zM949 446.5h1.75v1.75h-1.75zM956.5 446.5h4.75v1.75h-4.75zM884.5 452.5h1.75v1.75h-1.75zM884.5 454h1.75v1.75h-1.75zM886 455.5h1.75v1.75h-1.75zM892 457h1.75v1.75h-1.75z"/>
<path fill="#04fea1" d="M956.5 425.5h3.25v1.75h-3.25zM953.5 427h1.75v1.75h-1.75zM961 427h3.25v1.75h-3.25zM893.5 428.5h3.25v1.75h-3.25zM952 428.5h3.25v1.75h-3.25zM961 428.5h1.75v1.75h-1.75zM964 428.5h1.75v1.75h-1.75zM887.5 430h1.75v1.75h-1.75zM893.5 430h1.75v1.75h-1.75zM950.5 430h1.75v1.75h-1.75zM953.5 430h1.75v1.75h-1.75zM886 431.5h1.75v1.75h-1.75zM898 431.5h1.75v1.75h-1.75zM901 431.5h1.75v1.75h-1.75zM934 431.5h1.75v1.75h-1.75zM938.5 431.5h1.75v1.75h-1.75zM943 431.5h1.75v1.75h-1.75zM946 431.5h1.75v1.75h-1.75zM965.5 431.5h1.75v1.75h-1.75zM886 433h1.75v1.75h-1.75zM896.5 433h1.75v1.75h-1.75zM899.5 433h1.75v1.75h-1.75zM913 433h1.75v1.75h-1.75zM916 433h1.75v1.75h-1.75zM919 433h1.75v1.75h-1.75zM929.5 433h1.75v1.75h-1.75zM940 433h1.75v1.75h-1.75zM944.5 433h1.75v1.75h-1.75zM950.5 433h1.75v1.75h-1.75zM967 433h1.75v1.75h-1.75zM931 434.5h3.25v1.75h-3.25zM940 434.5h3.25v1.75h-3.25zM946 434.5h1.75v1.75h-1.75zM949 434.5h1.75v1.75h-1.75zM911.5 436h1.75v1.75h-1.75zM932.5 436h1.75v1.75h-1.75zM935.5 436h1.75v1.75h-1.75zM938.5 436h1.75v1.75h-1.75zM943 436h1.75v1.75h-1.75zM911.5 437.5h1.75v1.75h-1.75zM917.5 437.5h1.75v1.75h-1.75zM920.5 437.5h3.25v1.75h-3.25zM926.5 437.5h1.75v1.75h-1.75zM941.5 437.5h4.75v1.75h-4.75zM901 439h1.75v1.75h-1.75zM904 439h1.75v1.75h-1.75zM908.5 439h4.75v1.75h-4.75zM914.5 439h1.75v1.75h-1.75zM917.5 439h1.75v1.75h-1.75zM920.5 439h1.75v1.75h-1.75zM926.5 439h1.75v1.75h-1.75zM931 439h1.75v1.75h-1.75zM934 439h4.75v1.75h-4.75zM941.5 439h1.75v1.75h-1.75zM944.5 439h1.75v1.75h-1.75zM883 440.5h1.75v1.75h-1.75zM899.5 440.5h3.25v1.75h-3.25zM907 440.5h1.75v1.75h-1.75zM913 440.5h1.75v1.75h-1.75zM929.5 440.5h1.75v1.75h-1.75zM935.5 440.5h1.75v1.75h-1.75zM940 440.5h3.25v1.75h-3.25zM946 440.5h3.25v1.75h-3.25zM899.5 442h1.75v1.75h-1.75zM916 442h1.75v1.75h-1.75zM923.5 442h1.75v1.75h-1.75zM934 442h1.75v1.75h-1.75zM940 442h4.75v1.75h-4.75zM947.5 442h1.75v1.75h-1.75zM950.5 442h1.75v1.75h-1.75zM965.5 442h1.75v1.75h-1.75zM883 443.5h1.75v1.75h-1.75zM899.5 443.5h1.75v1.75h-1.75zM937 443.5h1.75v1.75h-1.75zM947.5 443.5h6.25v1.75h-6.25zM899.5 445h1.75v1.75h-1.75zM947.5 445h1.75v1.75h-1.75zM955 445h1.75v1.75h-1.75zM958 445h1.75v1.75h-1.75zM961 445h1.75v1.75h-1.75zM950.5 446.5h1.75v1.75h-1.75zM898 448h1.75v1.75h-1.75zM896.5 451h1.75v1.75h-1.75zM895 454h1.75v1.75h-1.75zM889 457h3.25v1.75h-3.25z"/>
<path fill="#10fb57" d="M955 425.5h1.75v1.75h-1.75zM959.5 425.5h1.75v1.75h-1.75zM955 427h3.25v1.75h-3.25zM959.5 427h1.75v1.75h-1.75zM956.5 428.5h3.25v1.75h-3.25zM889 430h1.75v1.75h-1.75zM895 430h1.75v1.75h-1.75zM952 430h1.75v1.75h-1.75zM965.5 430h1.75v1.75h-1.75zM895 431.5h3.25v1.75h-3.25zM944.5 431.5h1.75v1.75h-1.75zM947.5 431.5h1.75v1.75h-1.75zM953.5 431.5h1.75v1.75h-1.75zM967 431.5h1.75v1.75h-1.75zM895 433h1.75v1.75h-1.75zM898 434.5h1.75v1.75h-1.75zM938.5 434.5h1.75v1.75h-1.75zM943 434.5h3.25v1.75h-3.25zM947.5 434.5h1.75v1.75h-1.75zM896.5 436h1.75v1.75h-1.75zM899.5 436h1.75v1.75h-1.75zM946 436h1.75v1.75h-1.75zM949 436h1.75v1.75h-1.75zM967 436h1.75v1.75h-1.75zM896.5 437.5h4.75v1.75h-4.75zM914.5 437.5h1.75v1.75h-1.75zM928 437.5h1.75v1.75h-1.75zM946 437.5h1.75v1.75h-1.75zM965.5 437.5h1.75v1.75h-1.75zM898 439h1.75v1.75h-1.75zM913 439h1.75v1.75h-1.75zM916 439h1.75v1.75h-1.75zM919 439h1.75v1.75h-1.75zM943 439h1.75v1.75h-1.75zM964 439h1.75v1.75h-1.75zM926.5 440.5h3.25v1.75h-3.25zM931 440.5h4.75v1.75h-4.75zM958 440.5h1.75v1.75h-1.75zM964 440.5h1.75v1.75h-1.75zM908.5 442h1.75v1.75h-1.75zM944.5 442h1.75v1.75h-1.75zM962.5 442h3.25v1.75h-3.25zM898 443.5h1.75v1.75h-1.75zM943 443.5h1.75v1.75h-1.75zM946 443.5h1.75v1.75h-1.75zM961 443.5h1.75v1.75h-1.75zM952 445h3.25v1.75h-3.25zM956.5 445h1.75v1.75h-1.75zM959.5 445h1.75v1.75h-1.75zM898 446.5h3.25v1.75h-3.25zM896.5 449.5h1.75v1.75h-1.75zM893.5 454h1.75v1.75h-1.75zM890.5 455.5h1.75v1.75h-1.75zM893.5 455.5h1.75v1.75h-1.75z"/>
<path fill="#17fb33" d="M959.5 428.5h1.75v1.75h-1.75zM890.5 430h1.75v1.75h-1.75zM962.5 430h3.25v1.75h-3.25zM949 431.5h4.75v1.75h-4.75zM964 431.5h1.75v1.75h-1.75zM947.5 433h3.25v1.75h-3.25zM952 433h1.75v1.75h-1.75zM965.5 433h1.75v1.75h-1.75zM895 434.5h1.75v1.75h-1.75zM965.5 434.5h1.75v1.75h-1.75zM884.5 436h1.75v1.75h-1.75zM898 436h1.75v1.75h-1.75zM947.5 436h1.75v1.75h-1.75zM950.5 436h3.25v1.75h-3.25zM965.5 436h1.75v1.75h-1.75zM952 437.5h1.75v1.75h-1.75zM946 439h4.75v1.75h-4.75zM952 439h1.75v1.75h-1.75zM944.5 440.5h1.75v1.75h-1.75zM950.5 440.5h3.25v1.75h-3.25zM946 442h1.75v1.75h-1.75zM952 442h1.75v1.75h-1.75zM896.5 443.5h1.75v1.75h-1.75zM944.5 443.5h1.75v1.75h-1.75zM953.5 443.5h1.75v1.75h-1.75zM959.5 443.5h1.75v1.75h-1.75zM884.5 448h1.75v1.75h-1.75zM896.5 448h1.75v1.75h-1.75zM884.5 449.5h1.75v1.75h-1.75zM895 452.5h1.75v1.75h-1.75zM892 454h1.75v1.75h-1.75zM887.5 455.5h1.75v1.75h-1.75z"/>
<path fill="#1cfc23" d="M955 428.5h1.75v1.75h-1.75zM955 430h1.75v1.75h-1.75zM958 430h1.75v1.75h-1.75zM889 431.5h6.25v1.75h-6.25zM886 434.5h1.75v1.75h-1.75zM896.5 434.5h1.75v1.75h-1.75zM964 434.5h1.75v1.75h-1.75zM884.5 437.5h1.75v1.75h-1.75zM947.5 437.5h1.75v1.75h-1.75zM950.5 437.5h1.75v1.75h-1.75zM962.5 437.5h3.25v1.75h-3.25zM884.5 439h1.75v1.75h-1.75zM896.5 439h1.75v1.75h-1.75zM962.5 439h1.75v1.75h-1.75zM965.5 439h1.75v1.75h-1.75zM898 440.5h1.75v1.75h-1.75zM949 440.5h1.75v1.75h-1.75zM898 442h1.75v1.75h-1.75zM949 442h1.75v1.75h-1.75zM959.5 442h1.75v1.75h-1.75zM955 443.5h1.75v1.75h-1.75zM958 443.5h1.75v1.75h-1.75zM884.5 451h1.75v1.75h-1.75zM895 451h1.75v1.75h-1.75zM889 454h1.75v1.75h-1.75zM889 455.5h1.75v1.75h-1.75z"/>
<path fill="#22fd13" d="M962.5 428.5h1.75v1.75h-1.75zM961 430h1.75v1.75h-1.75zM961 431.5h3.25v1.75h-3.25zM887.5 433h3.25v1.75h-3.25zM953.5 433h1.75v1.75h-1.75zM964 433h1.75v1.75h-1.75zM893.5 434.5h1.75v1.75h-1.75zM950.5 434.5h1.75v1.75h-1.75zM886 436h1.75v1.75h-1.75zM895 436h1.75v1.75h-1.75zM956.5 436h1.75v1.75h-1.75zM962.5 436h3.25v1.75h-3.25zM949 437.5h1.75v1.75h-1.75zM958 437.5h1.75v1.75h-1.75zM895 439h1.75v1.75h-1.75zM950.5 439h1.75v1.75h-1.75zM953.5 439h1.75v1.75h-1.75zM896.5 440.5h1.75v1.75h-1.75zM953.5 440.5h1.75v1.75h-1.75zM962.5 440.5h1.75v1.75h-1.75zM896.5 442h1.75v1.75h-1.75zM953.5 442h3.25v1.75h-3.25zM956.5 443.5h1.75v1.75h-1.75zM884.5 446.5h1.75v1.75h-1.75zM896.5 446.5h1.75v1.75h-1.75zM886 454h1.75v1.75h-1.75zM892 455.5h1.75v1.75h-1.75z"/>
<path fill="#28ff01" d="M959.5 430h1.75v1.75h-1.75zM955 431.5h1.75v1.75h-1.75zM959.5 431.5h1.75v1.75h-1.75zM893.5 433h1.75v1.75h-1.75zM956.5 433h3.25v1.75h-3.25zM887.5 434.5h1.75v1.75h-1.75zM962.5 434.5h1.75v1.75h-1.75zM886 437.5h1.75v1.75h-1.75zM895 437.5h1.75v1.75h-1.75zM953.5 437.5h1.75v1.75h-1.75zM956.5 439h3.25v1.75h-3.25zM884.5 440.5h1.75v1.75h-1.75zM955 440.5h1.75v1.75h-1.75zM961 442h1.75v1.75h-1.75zM884.5 443.5h1.75v1.75h-1.75zM884.5 445h1.75v1.75h-1.75zM896.5 445h1.75v1.75h-1.75zM895 449.5h1.75v1.75h-1.75zM886 452.5h1.75v1.75h-1.75zM887.5 454h1.75v1.75h-1.75z"/>
<path fill="#4cff00" d="M956.5 430h1.75v1.75h-1.75zM956.5 431.5h3.25v1.75h-3.25zM959.5 433h3.25v1.75h-3.25zM892 434.5h1.75v1.75h-1.75zM952 434.5h1.75v1.75h-1.75zM955 434.5h1.75v1.75h-1.75zM887.5 436h1.75v1.75h-1.75zM953.5 436h1.75v1.75h-1.75zM893.5 437.5h1.75v1.75h-1.75zM956.5 437.5h1.75v1.75h-1.75zM955 439h1.75v1.75h-1.75zM959.5 439h3.25v1.75h-3.25zM895 440.5h1.75v1.75h-1.75zM961 440.5h1.75v1.75h-1.75zM884.5 442h1.75v1.75h-1.75zM956.5 442h3.25v1.75h-3.25zM895 448h1.75v1.75h-1.75zM893.5 452.5h1.75v1.75h-1.75z"/>
<path fill="#75ff00" d="M890.5 433h1.75v1.75h-1.75zM955 433h1.75v1.75h-1.75zM889 434.5h1.75v1.75h-1.75zM953.5 434.5h1.75v1.75h-1.75zM959.5 434.5h1.75v1.75h-1.75zM955 436h1.75v1.75h-1.75zM959.5 436h3.25v1.75h-3.25zM961 437.5h1.75v1.75h-1.75zM959.5 440.5h1.75v1.75h-1.75zM895 442h1.75v1.75h-1.75zM895 443.5h1.75v1.75h-1.75zM886 451h1.75v1.75h-1.75z"/>
<path fill="#a1ff00" d="M892 433h1.75v1.75h-1.75zM962.5 433h1.75v1.75h-1.75zM958 434.5h1.75v1.75h-1.75zM961 434.5h1.75v1.75h-1.75zM893.5 436h1.75v1.75h-1.75zM887.5 437.5h1.75v1.75h-1.75zM895 446.5h1.75v1.75h-1.75zM893.5 449.5h1.75v1.75h-1.75zM887.5 452.5h1.75v1.75h-1.75z"/>
<path fill="#c6fd00" d="M956.5 434.5h1.75v1.75h-1.75zM892 437.5h1.75v1.75h-1.75zM955 437.5h1.75v1.75h-1.75zM959.5 437.5h1.75v1.75h-1.75zM893.5 439h1.75v1.75h-1.75zM886 440.5h1.75v1.75h-1.75zM956.5 440.5h1.75v1.75h-1.75zM886 449.5h1.75v1.75h-1.75zM887.5 451h1.75v1.75h-1.75zM893.5 451h1.75v1.75h-1.75z"/>
<path fill="#dff700" d="M889 436h3.25v1.75h-3.25zM958 436h1.75v1.75h-1.75zM886 439h1.75v1.75h-1.75zM895 445h1.75v1.75h-1.75zM887.5 448h1.75v1.75h-1.75zM893.5 448h1.75v1.75h-1.75zM890.5 452.5h1.75v1.75h-1.75zM890.5 454h1.75v1.75h-1.75z"/>
<path fill="#f8f200" d="M892 436h1.75v1.75h-1.75zM892 442h1.75v1.75h-1.75zM886 443.5h1.75v1.75h-1.75zM886 445h1.75v1.75h-1.75zM886 448h1.75v1.75h-1.75zM887.5 449.5h1.75v1.75h-1.75zM892 451h1.75v1.75h-1.75zM889 452.5h1.75v1.75h-1.75zM892 452.5h1.75v1.75h-1.75z"/>
<path fill="#ffd500" d="M890.5 434.5h1.75v1.75h-1.75zM889 437.5h1.75v1.75h-1.75z"/>
<path fill="#ffae00" d="M890.5 437.5h1.75v1.75h-1.75zM893.5 440.5h1.75v1.75h-1.75zM886 442h1.75v1.75h-1.75zM893.5 442h1.75v1.75h-1.75zM886 446.5h3.25v1.75h-3.25zM889 449.5h1.75v1.75h-1.75zM889 451h1.75v1.75h-1.75z"/>
<path fill="#ff8600" d="M893.5 443.5h1.75v1.75h-1.75zM893.5 445h1.75v1.75h-1.75z"/>
<path fill="#ff5f00" d="M887.5 439h1.75v1.75h-1.75zM887.5 440.5h1.75v1.75h-1.75zM892 440.5h1.75v1.75h-1.75zM892 446.5h3.25v1.75h-3.25zM890.5 448h3.25v1.75h-3.25zM890.5 451h1.75v1.75h-1.75z"/>
<path fill="#fe3900" d="M890.5 449.5h1.75v1.75h-1.75z"/>
<path fill="#f72300" d="M890.5 439h3.25v1.75h-3.25zM887.5 443.5h1.75v1.75h-1.75zM890.5 445h1.75v1.75h-1.75zM892 449.5h1.75v1.75h-1.75z"/>
<path fill="#ef0c00" d="M889 439h1.75v1.75h-1.75zM889 440.5h3.25v1.75h-3.25zM887.5 442h4.75v1.75h-4.75zM889 443.5h4.75v1.75h-4.75zM887.5 445h3.25v1.75h-3.25zM892 445h1.75v1.75h-1.75zM889 446.5h3.25v1.75h-3.25zM889 448h1.75v1.75h-1.75z"/>
</svg>
<div class="abs" style="left:817px;top:395.8px;width:174px;height:2.4px;background:#2e2e2e"></div>
<div class="abs" style="left:817px;top:462.8px;width:174px;height:2.4px;background:#2e2e2e"></div>
<div class="abs" style="left:990px;top:397px;width:2.4px;height:66px;background:#2e2e2e"></div>
<div class="abs" style="left:985px;top:390.5px;width:11.5px;height:11.5px;background:#3f3f3f"></div>
<div class="abs" style="left:985px;top:458.3px;width:11.5px;height:11.5px;background:#3f3f3f"></div>
<div class="t" style="left:668.5px;top:632px;font-family:'Liberation Mono',monospace;font-size:13.2px;color:#444;white-space:pre;font-weight:700;letter-spacing:.6px">(  -17K,  65K)</div>
<div class="abs" style="left:682px;top:658px;width:33.5px;height:33.5px;border-radius:5px;border:1.5px solid #ababab;background:linear-gradient(#fff,#f0f0f0);box-shadow:0 1px 2px rgba(0,0,0,.3)"></div>
<svg style="left:688px;top:663px" width="24" height="24" viewBox="0 0 24 24">
<rect x=".7" y=".7" width="16" height="15" fill="#f4f7fa" stroke="#666" stroke-width="1.3"/>
<path d="M5.5 2.5C2.5 5 2.5 10 5.5 13" stroke="#3d8fb5" stroke-width="3.2" fill="none"/>
<ellipse cx="12" cy="6" rx="5" ry="4.6" fill="#2e8b2e"/><path d="M9.5 7.5l5-4" stroke="#8fdc6a" stroke-width="1.8"/>
<rect x="6.7" y="8.200" width="16" height="15" fill="#f4f7fa" stroke="#666" stroke-width="1.3"/>
<path d="M11.5 10C8.500 12.5 8.500 17.5 11.5 20.500" stroke="#3d8fb5" stroke-width="3.2" fill="none"/>
<ellipse cx="18" cy="13.5" rx="4.800" ry="4.600" fill="#2e8b2e"/><path d="M15.5 15l5-4" stroke="#8fdc6a" stroke-width="1.800"/>
<circle cx="14" cy="18.5" r="2.200" fill="#e39a16"/>
</svg>
<div class="abs" style="left:800px;top:659px;width:328.5px;height:31.5px;background:#bfbfbf;border:1.5px solid #8f8f8f;box-shadow:inset 1.5px 1.5px 0 #dcdcdc,1.5px 1.5px 0 #fbfbfb"></div>
<div class="t" style="left:905px;top:668px;width:120px;text-align:center;font-size:17px;color:#111">DAPI-A</div>
<svg style="left:1102.8px;top:668.3px" width="13.6" height="15.5" viewBox="0 0 13.6 15.5"><path d="M0 0H13.6L6.8 15.5Z" fill="#000"/></svg>
<div class="abs" style="left:1145.5px;top:657.0px;width:38.5px;height:38.0px;background:#f5f5f5;border:2px solid #8a8a8a;border-right:2.5px solid #454545;border-bottom:2.5px solid #454545"></div>
<div class="t" style="left:1153.0px;top:657.0px;font-family:'Liberation Serif',serif;font-weight:700;font-size:36.0px;color:#000">T</div>
<div class="abs" style="left:668.5px;top:706.5px;width:594px;height:96.5px;border:1.5px solid #e3e3e3;border-radius:3px"></div>
<div class="abs" style="left:676px;top:700px;width:117px;height:14px;background:#f0f0f0"></div>
<div class="t" style="left:679px;top:700.5px;font-size:14.5px;font-weight:700;color:#2a22ee;letter-spacing:.35px">Color Map Axis</div>
<div class="abs" style="left:704px;top:728px;width:19.5px;height:19.5px;background:#fff;border:1.5px solid #333"></div>
<div class="t" style="left:729.5px;top:731px;font-size:14.5px;color:#222;letter-spacing:.55px">Color Axis</div>
<div class="abs" style="left:843.7px;top:722px;width:269.5px;height:29.7px;background:linear-gradient(90deg,#0000ff 0%,#0008f4 3%,#00fb04 32%,#00ff00 33%,#ffff00 66.5%,#ff0000 99%)"></div>
<div class="abs" style="left:698px;top:758.5px;width:426px;height:32px;background:#bfbfbf;border:1.5px solid #8f8f8f;box-shadow:inset 1.5px 1.5px 0 #dcdcdc,1.5px 1.5px 0 #fbfbfb"></div>
<div class="t" style="left:850px;top:767.5px;width:120px;text-align:center;font-size:16.5px;color:#111">Alexa488-A</div>
<div class="abs" style="left:680px;top:824.2px;width:573px;height:29.2px;border-radius:3px;border:1.5px solid #9c9c9c;background:linear-gradient(#e0e0e0,#f6f6f6 32%,#f3f3f3 68%,#e6eff2);box-shadow:0 0 0 1px #fafafa"></div>
<svg style="left:684px;top:827.8px" width="22" height="22" viewBox="0 0 22 22"><rect x="0" y="0" width="19" height="18.500" fill="#e6e6e6" opacity=".9"/><path d="M8 8L16.500 16.500" stroke="#8fa6c2" stroke-width="3.800" stroke-linecap="round"/><circle cx="6.800" cy="6.800" r="4.600" fill="#a3b9d3"/><path d="M6.800 6.800L1 3.500L3.500 1Z" fill="#eef2f6"/></svg>
<div class="t" style="left:715px;top:832.4px;font-size:14.5px;font-weight:700;color:#222;letter-spacing:0.20px;white-space:pre">Options</div>
<svg style="left:1222px;top:831.8px" width="12" height="15" viewBox="0 0 12 15"><path d="M1 1.2L6 6L11 1.2M1 7.7L6 12.5L11 7.7" stroke="#333" stroke-width="1.8" fill="none"/></svg>
<div class="abs" style="left:680px;top:856.0px;width:573px;height:29.2px;border-radius:3px;border:1.5px solid #9c9c9c;background:linear-gradient(#e0e0e0,#f6f6f6 32%,#f3f3f3 68%,#e6eff2);box-shadow:0 0 0 1px #fafafa"></div>
<svg style="left:684px;top:859.6px" width="22" height="22" viewBox="0 0 22 22"><path d="M1.500 0V19.500H19" stroke="#5f9aa0" stroke-width="1.700" fill="none"/><path d="M5.500 1H18.500V11H13V15.500H5.500Z" fill="#82b4bc"/><path d="M13 11H18.500V15.500H13Z" fill="#f3f0de"/><path d="M2.500 14.500H5.500V18.500H2.500Z" fill="#e9a088"/></svg>
<div class="t" style="left:715px;top:864.2px;font-size:14.5px;font-weight:700;color:#222;letter-spacing:0.45px;white-space:pre">Active Gate</div>
<svg style="left:1222px;top:863.6px" width="12" height="15" viewBox="0 0 12 15"><path d="M1 1.2L6 6L11 1.2M1 7.7L6 12.5L11 7.7" stroke="#333" stroke-width="1.8" fill="none"/></svg>
<div class="abs" style="left:680px;top:887.5px;width:573px;height:29.2px;border-radius:3px;border:1.5px solid #9c9c9c;background:linear-gradient(#e0e0e0,#f6f6f6 32%,#f3f3f3 68%,#e6eff2);box-shadow:0 0 0 1px #fafafa"></div>
<svg style="left:687.500px;top:891.1px;margin-top:1.3px" width="13.500" height="19.500" viewBox="0 0 16 22" preserveAspectRatio="none"><path d="M13.500 5V1.500H1.500L8.500 10.500L1.500 20H13.500V16.500" stroke="#1f7485" stroke-width="2" fill="none"/></svg>
<div class="t" style="left:715px;top:895.7px;font-size:14.5px;font-weight:700;color:#222;letter-spacing:0.45px;white-space:pre">Statistics  -  Count: 8710 / 10000      87,1</div>
<svg style="left:1222px;top:895.1px" width="12" height="15" viewBox="0 0 12 15"><path d="M1 1.2L6 6L11 1.2M1 7.7L6 12.5L11 7.7" stroke="#333" stroke-width="1.8" fill="none"/></svg>

<!-- ================= WINDOW 3 : dialog ================= -->
<div id="w3" class="win"></div>
<div class="abs" style="left:1276px;top:126px;width:532px;height:39px;background:#fff"></div>
<div class="abs" style="left:1276px;top:126px;width:532px;height:1px;background:#3f7ccb"></div>
<div class="abs" style="left:1276px;top:126px;width:1px;height:236px;background:#3f7ccb"></div>
<div class="t" id="t3title" style="left:1282.5px;top:139px;font-size:17.8px;color:#0c0c0c;letter-spacing:.28px">Subpopulation Identification</div>
<svg style="left:1775px;top:138px" width="16" height="16" viewBox="0 0 16 16"><path d="M.5 .5L15.5 15.5M15.5 .5L.5 15.5" stroke="#222" stroke-width="1.3" fill="none"/></svg>
<div class="t" id="t3enter" style="left:1292.5px;top:184.5px;font-size:13.5px;color:#222;letter-spacing:1.12px;text-shadow:0 0 .5px rgba(0,0,0,.5)">Enter the name of this subpopulation:</div>
<div class="abs" style="left:1719px;top:183px;width:28px;height:27.5px;background:#000"></div>
<div class="abs" style="left:1307px;top:225px;width:478.5px;height:29.5px;background:#fff;border:1.5px solid #b4b4b4"></div>
<div class="abs" style="left:1316px;top:227px;width:105px;height:26.5px;background:#0a72d8"></div>
<div class="t" id="t3sel" style="left:1316.5px;top:230px;font-size:20px;color:#fff;letter-spacing:-.1px">Single Cells</div>
<div class="abs" style="left:1308.5px;top:257px;width:19.5px;height:31px;background:#e1e1e1;border:1px solid #adadad"></div>
<div class="abs" style="left:1314.3px;top:271.4px;width:6.6px;height:1.7px;background:#222"></div>
<div class="abs" style="left:1316.8px;top:269px;width:1.7px;height:6.6px;background:#222"></div>
<div class="abs" style="left:1502.5px;top:256.5px;width:148px;height:35.5px;border-radius:7px;border:1.5px solid #a2a2a2;background:linear-gradient(#fff,#f6f6f6 45%,#e9e9e9);box-shadow:0 1px 2px rgba(0,0,0,.35)"></div>
<div class="t" style="left:1508px;top:268.5px;font-size:14px;color:#222;letter-spacing:.55px;text-shadow:0 0 .5px rgba(0,0,0,.5)">Favorites</div>
<svg style="left:1579px;top:273px" width="6" height="5" viewBox="0 0 6 5"><path d="M0 0H6L3 4.5Z" fill="#222"/></svg>
<div class="abs dbtn" style="left:1279px;top:320.5px;width:78.5px;height:31px"></div>
<div class="abs dbtn" style="left:1361px;top:320.5px;width:97.5px;height:31px"></div>
<div class="abs dbtn" style="left:1599.5px;top:320.5px;width:97.5px;height:31px;border:2.5px solid #0a78d7"></div>
<div class="abs dbtn" style="left:1709.5px;top:320.5px;width:97px;height:31px"></div>
<div class="t dbt" style="left:1279px;top:329px;width:78.5px">Help</div>
<div class="t dbt" style="left:1361px;top:329px;width:97.5px">Display</div>
<div class="t dbt" style="left:1599.5px;top:329px;width:97.5px">OK</div>
<div class="t dbt" style="left:1709.5px;top:329px;width:97px">Cancel</div>

<div class="abs" style="left:0;top:1078px;width:1920px;height:2px;background:#1c1b3c"></div>
</body>
</html>
